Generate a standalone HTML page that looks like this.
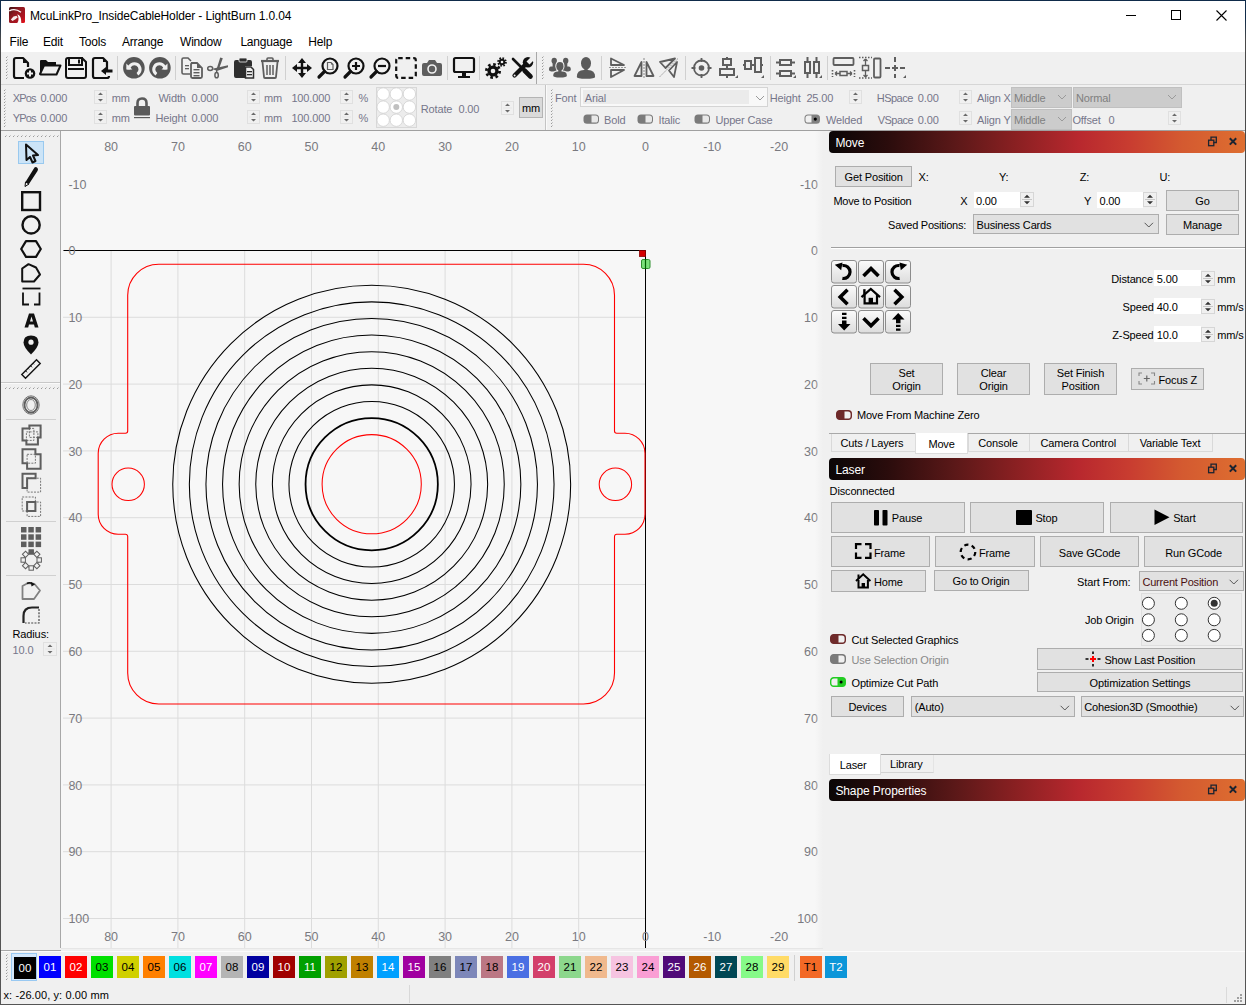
<!DOCTYPE html><html><head><meta charset="utf-8"><style>
html,body{margin:0;padding:0;}
body{width:1246px;height:1005px;position:relative;overflow:hidden;background:#f0f0f0;font-family:"Liberation Sans", sans-serif;}
.t{position:absolute;white-space:nowrap;}
.b{position:absolute;box-sizing:border-box;}
svg{position:absolute;overflow:visible;}

</style></head><body>
<div class="b" style="left:0px;top:0px;width:1246px;height:31px;background:#fff;"></div>
<div class="b" style="left:0px;top:31px;width:1246px;height:21px;background:#fff;"></div>
<div class="b" style="left:0px;top:0px;width:1246px;height:1px;background:#0f2b4a;"></div>
<div class="b" style="left:0px;top:0px;width:1px;height:1005px;background:linear-gradient(#0f2b4a 0px, #0f2b4a 18px, #4a4a4a 40px, #555 100%);"></div>
<div class="b" style="left:1245px;top:0px;width:1px;height:1005px;background:linear-gradient(#0f2b4a 0px, #0f2b4a 18px, #4a4a4a 40px, #555 100%);"></div>
<div class="b" style="left:0px;top:1004px;width:1246px;height:1px;background:#555;"></div>
<svg style="left:9px;top:7px" width="16" height="16" viewBox="0 0 16 16">
<defs><linearGradient id="lg1" x1="0" y1="0" x2="1" y2="1"><stop offset="0" stop-color="#3a1010"/><stop offset="0.35" stop-color="#8a1820"/><stop offset="0.75" stop-color="#b01420"/><stop offset="1" stop-color="#f01018"/></linearGradient></defs>
<rect x="0" y="0" width="16" height="16" rx="1.5" fill="url(#lg1)"/>
<path d="M0.3 3.8 Q6 0.8 12 5.2" stroke="#fff" stroke-width="1.3" fill="none"/>
<path d="M8.3 7.2 Q11.5 8.5 12 12 L12.3 16 L8.3 16 Q10.8 12.5 8.3 7.2 Z" fill="#fff"/>
<path d="M1.8 12.5 L4.5 9.5 L7.5 8.8 L8.8 10.2 L6.5 12.3 L3.5 14 Z" fill="#f6eaea"/>
</svg>
<div class="t" style="left:30px;top:10px;font-size:12px;line-height:12px;color:#000;letter-spacing:-0.13px;">McuLinkPro_InsideCableHolder - LightBurn 1.0.04</div>
<div class="b" style="left:1126px;top:15px;width:10px;height:1px;background:#000;"></div>
<div class="b" style="left:1171px;top:10px;width:10px;height:10px;border:1px solid #000;"></div>
<svg style="left:1216px;top:10px" width="11" height="11" viewBox="0 0 11 11"><path d="M0.5 0.5 L10.5 10.5 M10.5 0.5 L0.5 10.5" stroke="#000" stroke-width="1.1"/></svg>
<div class="t" style="left:9.6px;top:36px;font-size:12px;line-height:12px;color:#000;letter-spacing:-0.2px;">File</div>
<div class="t" style="left:43px;top:36px;font-size:12px;line-height:12px;color:#000;letter-spacing:-0.2px;">Edit</div>
<div class="t" style="left:79px;top:36px;font-size:12px;line-height:12px;color:#000;letter-spacing:-0.2px;">Tools</div>
<div class="t" style="left:122px;top:36px;font-size:12px;line-height:12px;color:#000;letter-spacing:-0.2px;">Arrange</div>
<div class="t" style="left:180px;top:36px;font-size:12px;line-height:12px;color:#000;letter-spacing:-0.2px;">Window</div>
<div class="t" style="left:240.4px;top:36px;font-size:12px;line-height:12px;color:#000;letter-spacing:-0.2px;">Language</div>
<div class="t" style="left:308.3px;top:36px;font-size:12px;line-height:12px;color:#000;letter-spacing:-0.2px;">Help</div>
<div class="b" style="left:1px;top:52px;width:1244px;height:32px;background:#f0f0f0;"></div>
<div class="b" style="left:1px;top:84px;width:1244px;height:1px;background:#d6d6d6;"></div>
<svg style="left:0;top:0" width="1246" height="1005"><rect x="6" y="57" width="1" height="1" fill="#9a9a9a"/><rect x="7" y="56" width="1" height="1" fill="#c8c8c8"/><rect x="6" y="60" width="1" height="1" fill="#9a9a9a"/><rect x="7" y="59" width="1" height="1" fill="#c8c8c8"/><rect x="6" y="63" width="1" height="1" fill="#9a9a9a"/><rect x="7" y="62" width="1" height="1" fill="#c8c8c8"/><rect x="6" y="66" width="1" height="1" fill="#9a9a9a"/><rect x="7" y="65" width="1" height="1" fill="#c8c8c8"/><rect x="6" y="69" width="1" height="1" fill="#9a9a9a"/><rect x="7" y="68" width="1" height="1" fill="#c8c8c8"/><rect x="6" y="72" width="1" height="1" fill="#9a9a9a"/><rect x="7" y="71" width="1" height="1" fill="#c8c8c8"/><rect x="6" y="75" width="1" height="1" fill="#9a9a9a"/><rect x="7" y="74" width="1" height="1" fill="#c8c8c8"/><rect x="6" y="78" width="1" height="1" fill="#9a9a9a"/><rect x="7" y="77" width="1" height="1" fill="#c8c8c8"/></svg>
<svg style="left:13px;top:57px" width="23" height="22" viewBox="0 0 23 22"><path d="M1 3 Q1 1 3 1 L10 1 L15 6 L15 10" stroke="#111" stroke-width="2.2" fill="none" stroke-linejoin="round"/><path d="M10 1 L10 6 L15 6" fill="#111"/><path d="M1 3 L1 19 Q1 21 3 21 L11 21" stroke="#111" stroke-width="2.2" fill="none"/><circle cx="17" cy="16.5" r="5.3" fill="#111"/><path d="M17 13.5 V19.5 M14 16.5 H20" stroke="#f0f0f0" stroke-width="2"/></svg>
<svg style="left:39px;top:59px" width="23" height="17" viewBox="0 0 23 17"><path d="M1 2 Q1 1 2 1 L7 1 L9 3 L17 3 L17 6 L5 6 L1 15 Z" fill="#111"/><path d="M1 15 L5 6.5 L21.5 6.5 L17.5 15.5 L2 15.5 Z" stroke="#111" stroke-width="2" fill="none" stroke-linejoin="round"/></svg>
<svg style="left:65px;top:57px" width="22" height="22" viewBox="0 0 22 22"><path d="M1 3 Q1 1 3 1 L17 1 L21 5 L21 19 Q21 21 19 21 L3 21 Q1 21 1 19 Z" stroke="#111" stroke-width="2" fill="none"/><rect x="4" y="1" width="13" height="7" stroke="#111" stroke-width="2" fill="none"/><rect x="13" y="2.5" width="2" height="4" fill="#111"/><rect x="3" y="11" width="16" height="2" fill="#111"/></svg>
<svg style="left:92px;top:57px" width="21" height="22" viewBox="0 0 21 22"><path d="M15 13 L15 5 L11 1 L3 1 Q1 1 1 3 L1 19 Q1 21 3 21 L15 21 Q17 21 17 19" stroke="#111" stroke-width="2.2" fill="none" stroke-linejoin="round"/><path d="M11 1 L11 5 L15 5 Z" fill="#111"/><path d="M9 14 L14 10 L14 12.5 L20.5 12.5 L20.5 15.5 L14 15.5 L14 18 Z" fill="#111"/></svg>
<div class="b" style="left:117px;top:56px;width:1px;height:24px;background:#d0d0d0;"></div>
<svg style="left:123px;top:57px" width="22" height="22" viewBox="0 0 22 22"><circle cx="10.9" cy="10.8" r="10.8" fill="#555"/><path d="M4.20 12.40 A7.2 7.2 0 1 1 15.22 18.51 L13.57 15.88 A4.1 4.1 0 1 0 7.30 12.40 Z" fill="#f0f0f0"/><path d="M3.3 6.6 L3.3 12.4 L9.3 12.4 Z" fill="#f0f0f0"/></svg>
<svg style="left:149px;top:57px" width="22" height="22" viewBox="0 0 22 22"><g transform="translate(21.8 0) scale(-1 1)"><circle cx="10.9" cy="10.8" r="10.8" fill="#555"/><path d="M4.20 12.40 A7.2 7.2 0 1 1 15.22 18.51 L13.57 15.88 A4.1 4.1 0 1 0 7.30 12.40 Z" fill="#f0f0f0"/><path d="M3.3 6.6 L3.3 12.4 L9.3 12.4 Z" fill="#f0f0f0"/></g></svg>
<div class="b" style="left:175px;top:56px;width:1px;height:24px;background:#d0d0d0;"></div>
<svg style="left:181px;top:57px" width="22" height="22" viewBox="0 0 22 22"><path d="M9 17 L2.5 17 Q1 17 1 15.5 L1 2.5 Q1 1 2.5 1 L7 1 L10 4" stroke="#5e5e5e" stroke-width="1.6" fill="none"/><rect x="4" y="8" width="4" height="1.3" fill="#5e5e5e"/><rect x="4" y="11" width="4" height="1.3" fill="#5e5e5e"/><path d="M10 6 L16 6 L21 11 L21 19.5 Q21 21 19.5 21 L11.5 21 Q10 21 10 19.5 L10 7.5 Q10 6 11.5 6 Z" stroke="#5e5e5e" stroke-width="1.8" fill="none"/><path d="M16 6 L16 11 L21 11 Z" fill="#5e5e5e"/><rect x="12.5" y="12" width="6" height="1.4" fill="#5e5e5e"/><rect x="12.5" y="15" width="6" height="1.4" fill="#5e5e5e"/><rect x="12.5" y="18" width="6" height="1.4" fill="#5e5e5e"/></svg>
<svg style="left:207px;top:57px" width="21" height="22" viewBox="0 0 21 22"><ellipse cx="3.2" cy="11.5" rx="2.5" ry="1.9" stroke="#5e5e5e" stroke-width="1.5" fill="none"/><ellipse cx="9.6" cy="18.2" rx="1.7" ry="2.6" stroke="#5e5e5e" stroke-width="1.5" fill="none"/><path d="M13.2 0.5 L15.8 1.2 L11.6 13 L9.2 13.2 Z" fill="#5e5e5e"/><path d="M21 8.2 L21 10.2 L10.5 13.8 L6.2 12.6 L6.5 11.4 Z" fill="#5e5e5e"/><path d="M9.5 13 L9.8 15.6" stroke="#5e5e5e" stroke-width="1.4"/></svg>
<svg style="left:233px;top:57px" width="21" height="22" viewBox="0 0 21 22"><path d="M3 3 L17 3 Q19 3 19 5 L19 9 L12 9 L12 21 L3 21 Q1 21 1 19 L1 5 Q1 3 3 3 Z" fill="#2e2e2e"/><rect x="6" y="1" width="8" height="4" rx="1" fill="#2e2e2e" stroke="#f0f0f0" stroke-width="0.8"/><path d="M12.5 10 L18 10 L20.5 12.5 L20.5 21 L12.5 21 Z" fill="#f0f0f0" stroke="#2e2e2e" stroke-width="1.5"/><rect x="14" y="14" width="5" height="1.3" fill="#2e2e2e"/><rect x="14" y="17" width="5" height="1.3" fill="#2e2e2e"/></svg>
<svg style="left:260px;top:57px" width="20" height="22" viewBox="0 0 20 22"><path d="M1 4 L19 4" stroke="#5e5e5e" stroke-width="2.2"/><path d="M7 4 L7 2 Q7 1 8 1 L12 1 Q13 1 13 2 L13 4" stroke="#5e5e5e" stroke-width="1.6" fill="none"/><path d="M2.5 5 L4 20 Q4 21 5 21 L15 21 Q16 21 16 20 L17.5 5" stroke="#5e5e5e" stroke-width="1.8" fill="none"/><path d="M7 8 V18 M10 8 V18 M13 8 V18" stroke="#5e5e5e" stroke-width="1.5"/></svg>
<div class="b" style="left:285px;top:56px;width:1px;height:24px;background:#d0d0d0;"></div>
<svg style="left:291px;top:57px" width="22" height="22" viewBox="0 0 22 22"><path d="M11 1 L15 6 L12.2 6 L12.2 9.8 L16 9.8 L16 7 L21 11 L16 15 L16 12.2 L12.2 12.2 L12.2 16 L15 16 L11 21 L7 16 L9.8 16 L9.8 12.2 L6 12.2 L6 15 L1 11 L6 7 L6 9.8 L9.8 9.8 L9.8 6 L7 6 Z" fill="#111"/></svg>
<svg style="left:317px;top:57px" width="22" height="22" viewBox="0 0 22 22"><circle cx="13" cy="9" r="7.5" stroke="#111" stroke-width="2.2" fill="none"/><path d="M7.5 14.5 L2 20" stroke="#111" stroke-width="3.2" stroke-linecap="round"/><path d="M10.5 5.5 L14 5.5 L16 7.5 L16 12.5 L10.5 12.5 Z" stroke="#5e5e5e" stroke-width="1.2" fill="none"/><path d="M14 5.5 L14 7.5 L16 7.5" fill="#5e5e5e"/></svg>
<svg style="left:343px;top:57px" width="22" height="22" viewBox="0 0 22 22"><circle cx="13" cy="9" r="7.5" stroke="#111" stroke-width="2.2" fill="none"/><path d="M7.5 14.5 L2 20" stroke="#111" stroke-width="3.2" stroke-linecap="round"/><path d="M13 5 V13 M9 9 H17" stroke="#111" stroke-width="2.2"/></svg>
<svg style="left:369px;top:57px" width="22" height="22" viewBox="0 0 22 22"><circle cx="13" cy="9" r="7.5" stroke="#111" stroke-width="2.2" fill="none"/><path d="M7.5 14.5 L2 20" stroke="#111" stroke-width="3.2" stroke-linecap="round"/><path d="M9 9 H17" stroke="#111" stroke-width="2.2"/></svg>
<svg style="left:395px;top:57px" width="22" height="22" viewBox="0 0 22 22"><rect x="1.2" y="1.2" width="19.6" height="19.6" rx="2" stroke="#111" stroke-width="2.2" fill="none" stroke-dasharray="4.5 3"/></svg>
<svg style="left:421px;top:59px" width="22" height="18" viewBox="0 0 22 18"><path d="M1 6 Q1 4 3 4 L6 4 L8 1 L14 1 L16 4 L19 4 Q21 4 21 6 L21 15 Q21 17 19 17 L3 17 Q1 17 1 15 Z" fill="#5e5e5e"/><circle cx="11" cy="10" r="4" stroke="#f0f0f0" stroke-width="1.6" fill="none"/></svg>
<div class="b" style="left:447px;top:56px;width:1px;height:24px;background:#d0d0d0;"></div>
<svg style="left:453px;top:57px" width="22" height="22" viewBox="0 0 22 22"><rect x="1" y="1" width="20" height="14" rx="1.5" stroke="#111" stroke-width="2.2" fill="none"/><path d="M9 15 L9 19 L13 19 L13 15 Z" fill="#111"/><rect x="5" y="19" width="12" height="2" fill="#111"/></svg>
<div class="b" style="left:479px;top:56px;width:1px;height:24px;background:#d0d0d0;"></div>
<svg style="left:485px;top:57px" width="22" height="22" viewBox="0 0 22 22"><circle cx="8" cy="14" r="5.6" fill="#111"/><circle cx="8" cy="14" r="6.6" stroke="#111" stroke-width="2.8" fill="none" stroke-dasharray="2.6 2.58"/><circle cx="8" cy="14" r="2.3" fill="#f0f0f0"/><circle cx="17" cy="5" r="3.2" fill="#111"/><circle cx="17" cy="5" r="3.9" stroke="#111" stroke-width="1.8" fill="none" stroke-dasharray="1.6 1.46"/><circle cx="17" cy="5" r="1.3" fill="#f0f0f0"/></svg>
<svg style="left:511px;top:57px" width="23" height="22" viewBox="0 0 23 22"><path d="M2 2 L11 11" stroke="#111" stroke-width="2.6" stroke-linecap="round"/><path d="M13.5 13.5 L19.5 19.5" stroke="#111" stroke-width="4.6" stroke-linecap="round"/><path d="M3.5 18.5 L14 8" stroke="#111" stroke-width="4.2" stroke-linecap="round"/><circle cx="17" cy="5.3" r="5.2" fill="#111"/><path d="M15.5 4.5 L20 0 L23 3 L18.5 7.5 Z" fill="#f0f0f0"/><circle cx="3.6" cy="18.4" r="1" fill="#f0f0f0"/></svg>
<div class="b" style="left:536px;top:52px;width:1px;height:32px;background:#a8a8a8;"></div>
<svg style="left:0;top:0" width="1246" height="1005"><rect x="542" y="57" width="1" height="1" fill="#9a9a9a"/><rect x="543" y="56" width="1" height="1" fill="#c8c8c8"/><rect x="542" y="60" width="1" height="1" fill="#9a9a9a"/><rect x="543" y="59" width="1" height="1" fill="#c8c8c8"/><rect x="542" y="63" width="1" height="1" fill="#9a9a9a"/><rect x="543" y="62" width="1" height="1" fill="#c8c8c8"/><rect x="542" y="66" width="1" height="1" fill="#9a9a9a"/><rect x="543" y="65" width="1" height="1" fill="#c8c8c8"/><rect x="542" y="69" width="1" height="1" fill="#9a9a9a"/><rect x="543" y="68" width="1" height="1" fill="#c8c8c8"/><rect x="542" y="72" width="1" height="1" fill="#9a9a9a"/><rect x="543" y="71" width="1" height="1" fill="#c8c8c8"/><rect x="542" y="75" width="1" height="1" fill="#9a9a9a"/><rect x="543" y="74" width="1" height="1" fill="#c8c8c8"/><rect x="542" y="78" width="1" height="1" fill="#9a9a9a"/><rect x="543" y="77" width="1" height="1" fill="#c8c8c8"/></svg>
<svg style="left:0;top:0" width="1246" height="1005"><g fill="#5a5a5a"><ellipse cx="554.2" cy="60.8" rx="2.7" ry="3.0"/><path d="M549 69.7 Q549 66.5 550.9 66.5 L554.9 66.5 Q556.8 66.5 556.8 69.7 Q556.8 71.5 552.9 71.5 Q549 71.5 549 69.7 Z"/><rect x="552.6" y="62.3" width="3.2" height="4.700000000000003"/><ellipse cx="565.7" cy="60.8" rx="2.7" ry="3.0"/><path d="M562.5 69.7 Q562.5 66.5 564.65 66.5 L568.65 66.5 Q570.8 66.5 570.8 69.7 Q570.8 71.5 566.65 71.5 Q562.5 71.5 562.5 69.7 Z"/><rect x="564.1" y="62.3" width="3.2" height="4.700000000000003"/></g><g fill="#f0f0f0" stroke="#f0f0f0" stroke-width="2"><ellipse cx="559.9" cy="66.2" rx="3.6" ry="4.3"/><path d="M553.2 75.7 Q553.2 71.5 558.05 71.5 L562.05 71.5 Q566.9 71.5 566.9 75.7 Q566.9 77.5 560.05 77.5 Q553.2 77.5 553.2 75.7 Z"/><rect x="558.3" y="69.0" width="3.2" height="3.0"/></g><g fill="#5a5a5a"><ellipse cx="559.9" cy="66.2" rx="3.6" ry="4.3"/><path d="M553.2 75.7 Q553.2 71.5 558.05 71.5 L562.05 71.5 Q566.9 71.5 566.9 75.7 Q566.9 77.5 560.05 77.5 Q553.2 77.5 553.2 75.7 Z"/><rect x="558.3" y="69.0" width="3.2" height="3.0"/></g><g fill="#5a5a5a"><ellipse cx="586" cy="63.2" rx="5" ry="6.3"/><path d="M576.8 76.9 Q576.8 70 583.95 70 L587.95 70 Q595.1 70 595.1 76.9 Q595.1 78.7 585.95 78.7 Q576.8 78.7 576.8 76.9 Z"/><rect x="584.4" y="68.0" width="3.2" height="2.5"/></g></svg>
<div class="b" style="left:601px;top:56px;width:1px;height:24px;background:#d0d0d0;"></div>
<svg style="left:609px;top:57px" width="18" height="22" viewBox="0 0 18 22"><path d="M2 1.5 L15 8 L2 8 Z M2 13 L15 13 L2 20 Z" stroke="#5e5e5e" stroke-width="1.8" fill="none" stroke-linejoin="round"/><path d="M0 10.5 H17" stroke="#9a9a9a" stroke-width="1.2" stroke-dasharray="2 1"/></svg>
<svg style="left:633px;top:57px" width="23" height="22" viewBox="0 0 23 22"><path d="M8.5 5 L1.5 19 L8.5 19 Z M13.5 5 L20.5 19 L13.5 19 Z" stroke="#5e5e5e" stroke-width="1.8" fill="none" stroke-linejoin="round"/><path d="M11 1 V21" stroke="#9a9a9a" stroke-width="1.2" stroke-dasharray="2 1"/></svg>
<svg style="left:659px;top:57px" width="20" height="22" viewBox="0 0 20 22"><path d="M1 5 L16 1.5 L6.5 11 Z M18 5 L15 20 L10 13.5 Z" stroke="#5e5e5e" stroke-width="1.8" fill="none" stroke-linejoin="round"/><path d="M19 1.5 L0.5 20" stroke="#9a9a9a" stroke-width="1" stroke-dasharray="2 1"/></svg>
<div class="b" style="left:685px;top:56px;width:1px;height:24px;background:#d0d0d0;"></div>
<svg style="left:691px;top:57px" width="21" height="22" viewBox="0 0 21 22"><circle cx="10.5" cy="11" r="7.5" stroke="#5e5e5e" stroke-width="1.8" fill="none"/><circle cx="10.5" cy="11" r="2.8" fill="#5e5e5e"/><path d="M10.5 1 V5 M10.5 17 V21 M0.5 11 H4.5 M16.5 11 H20.5" stroke="#5e5e5e" stroke-width="1.8"/></svg>
<svg style="left:719px;top:57px" width="20" height="22" viewBox="0 0 20 22"><rect x="4" y="2" width="8" height="6" stroke="#5e5e5e" stroke-width="2" fill="none"/><rect x="1" y="12" width="14" height="6" stroke="#5e5e5e" stroke-width="2" fill="none"/><path d="M8 0 V2 M8 8 V12 M8 18 V21" stroke="#5e5e5e" stroke-width="2"/><path d="M19 21 L19 18 L16 21 Z" fill="#5e5e5e"/></svg>
<svg style="left:743px;top:57px" width="22" height="22" viewBox="0 0 22 22"><rect x="2" y="4" width="6" height="8" stroke="#5e5e5e" stroke-width="2" fill="none"/><rect x="12" y="1" width="6" height="14" stroke="#5e5e5e" stroke-width="2" fill="none"/><path d="M0 8 H2 M8 8 H12 M18 8 H20" stroke="#5e5e5e" stroke-width="2"/><path d="M21 21 L21 18 L18 21 Z" fill="#5e5e5e"/></svg>
<div class="b" style="left:770px;top:56px;width:1px;height:24px;background:#d0d0d0;"></div>
<svg style="left:776px;top:57px" width="21" height="22" viewBox="0 0 21 22"><rect x="4" y="3" width="11" height="5" stroke="#5e5e5e" stroke-width="2" fill="none"/><rect x="4" y="14" width="11" height="5" stroke="#5e5e5e" stroke-width="2" fill="none"/><path d="M0 5.5 H4 M15 5.5 H19 M0 16.5 H4 M15 16.5 H19" stroke="#5e5e5e" stroke-width="2"/><path d="M20 21 L20 18 L17 21 Z" fill="#5e5e5e"/></svg>
<svg style="left:802px;top:57px" width="21" height="22" viewBox="0 0 21 22"><rect x="3" y="5" width="5" height="11" stroke="#5e5e5e" stroke-width="2" fill="none"/><rect x="12" y="5" width="5" height="11" stroke="#5e5e5e" stroke-width="2" fill="none"/><path d="M5.5 0 V5 M5.5 16 V21 M14.5 0 V5 M14.5 16 V21" stroke="#5e5e5e" stroke-width="2"/><path d="M20 21 L20 18 L17 21 Z" fill="#5e5e5e"/></svg>
<div class="b" style="left:827px;top:56px;width:1px;height:24px;background:#d0d0d0;"></div>
<svg style="left:832px;top:57px" width="24" height="22" viewBox="0 0 24 22"><rect x="1.5" y="1" width="20" height="7" rx="1" stroke="#5e5e5e" stroke-width="1.8" fill="none"/><path d="M0.5 13 V20 M22.5 13 V20" stroke="#5e5e5e" stroke-width="1.6" stroke-dasharray="1.5 1.5"/><rect x="8" y="14.5" width="7" height="4" stroke="#5e5e5e" stroke-width="1.5" fill="none"/><path d="M3 16.5 H8 M15 16.5 H20 M3 16.5 L5 14.5 M3 16.5 L5 18.5 M20 16.5 L18 14.5 M20 16.5 L18 18.5" stroke="#5e5e5e" stroke-width="1.3"/></svg>
<svg style="left:858px;top:57px" width="15" height="22" viewBox="0 0 15 22"><path d="M1 0.5 H14 M1 21 H14" stroke="#5e5e5e" stroke-width="1.6" stroke-dasharray="1.5 1.5"/><rect x="4.5" y="8.5" width="6" height="5" stroke="#5e5e5e" stroke-width="1.5" fill="none"/><path d="M7.5 2 V8.5 M7.5 13.5 V20 M7.5 2 L5.5 4 M7.5 2 L9.5 4 M7.5 20 L5.5 18 M7.5 20 L9.5 18" stroke="#5e5e5e" stroke-width="1.3"/></svg>
<svg style="left:873px;top:57px" width="9" height="22" viewBox="0 0 9 22"><rect x="1" y="1.5" width="6.5" height="19" rx="1" stroke="#5e5e5e" stroke-width="1.8" fill="none"/></svg>
<svg style="left:885px;top:57px" width="22" height="22" viewBox="0 0 22 22"><path d="M10 0 V5 M10 8 V14 M10 17 V21 M0 11 H5 M7 11 H13 M15 11 H20" stroke="#5e5e5e" stroke-width="2"/><path d="M21 21 L21 18 L18 21 Z" fill="#5e5e5e"/></svg>
<div class="b" style="left:1px;top:85px;width:1244px;height:45px;background:#f0f0f0;"></div>
<div class="b" style="left:1px;top:130px;width:1244px;height:1px;background:#a0a0a0;"></div>
<svg style="left:0;top:0" width="1246" height="1005"><rect x="4" y="90" width="1" height="1" fill="#9a9a9a"/><rect x="5" y="89" width="1" height="1" fill="#c8c8c8"/><rect x="4" y="93" width="1" height="1" fill="#9a9a9a"/><rect x="5" y="92" width="1" height="1" fill="#c8c8c8"/><rect x="4" y="96" width="1" height="1" fill="#9a9a9a"/><rect x="5" y="95" width="1" height="1" fill="#c8c8c8"/><rect x="4" y="99" width="1" height="1" fill="#9a9a9a"/><rect x="5" y="98" width="1" height="1" fill="#c8c8c8"/><rect x="4" y="102" width="1" height="1" fill="#9a9a9a"/><rect x="5" y="101" width="1" height="1" fill="#c8c8c8"/><rect x="4" y="105" width="1" height="1" fill="#9a9a9a"/><rect x="5" y="104" width="1" height="1" fill="#c8c8c8"/><rect x="4" y="108" width="1" height="1" fill="#9a9a9a"/><rect x="5" y="107" width="1" height="1" fill="#c8c8c8"/><rect x="4" y="111" width="1" height="1" fill="#9a9a9a"/><rect x="5" y="110" width="1" height="1" fill="#c8c8c8"/><rect x="4" y="114" width="1" height="1" fill="#9a9a9a"/><rect x="5" y="113" width="1" height="1" fill="#c8c8c8"/><rect x="4" y="117" width="1" height="1" fill="#9a9a9a"/><rect x="5" y="116" width="1" height="1" fill="#c8c8c8"/><rect x="4" y="120" width="1" height="1" fill="#9a9a9a"/><rect x="5" y="119" width="1" height="1" fill="#c8c8c8"/><rect x="4" y="123" width="1" height="1" fill="#9a9a9a"/><rect x="5" y="122" width="1" height="1" fill="#c8c8c8"/><rect x="4" y="126" width="1" height="1" fill="#9a9a9a"/><rect x="5" y="125" width="1" height="1" fill="#c8c8c8"/></svg>
<div class="t" style="left:12.8px;top:93px;font-size:11px;line-height:11px;color:#76768a;letter-spacing:-0.9px;">XPos</div>
<div class="t" style="left:40.4px;top:93px;font-size:11px;line-height:11px;color:#76768a;letter-spacing:-0.15px;">0.000</div>
<div class="t" style="left:12.8px;top:113px;font-size:11px;line-height:11px;color:#76768a;letter-spacing:-0.9px;">YPos</div>
<div class="t" style="left:40.4px;top:113px;font-size:11px;line-height:11px;color:#76768a;letter-spacing:-0.15px;">0.000</div>
<div class="b" style="left:94px;top:90px;width:13px;height:14px;border:1px solid #e0e0e0;background:#f0f0f0;"></div>
<svg style="left:94px;top:90px" width="13" height="14"><path d="M4.0 5.0 L6.5 2.5 L9.0 5.0 Z M4.0 9.0 L6.5 11.5 L9.0 9.0 Z" fill="#6a6a6a"/><path d="M2 7.0 H11" stroke="#e6e6e6" stroke-width="1"/></svg>
<div class="b" style="left:94px;top:110px;width:13px;height:14px;border:1px solid #e0e0e0;background:#f0f0f0;"></div>
<svg style="left:94px;top:110px" width="13" height="14"><path d="M4.0 5.0 L6.5 2.5 L9.0 5.0 Z M4.0 9.0 L6.5 11.5 L9.0 9.0 Z" fill="#6a6a6a"/><path d="M2 7.0 H11" stroke="#e6e6e6" stroke-width="1"/></svg>
<div class="t" style="left:111.7px;top:93px;font-size:11px;line-height:11px;color:#76768a;letter-spacing:-0.15px;">mm</div>
<div class="t" style="left:111.7px;top:113px;font-size:11px;line-height:11px;color:#76768a;letter-spacing:-0.15px;">mm</div>
<svg style="left:133px;top:97px" width="18" height="22" viewBox="0 0 18 22"><path d="M4.5 9 L4.5 6 Q4.5 1.5 9 1.5 Q13.5 1.5 13.5 6 L13.5 9" stroke="#5a5a5a" stroke-width="2.6" fill="none"/><rect x="1" y="9" width="16" height="9.5" rx="1" fill="#5a5a5a"/><rect x="1" y="20" width="16" height="1.2" fill="#5a5a5a"/></svg>
<div class="t" style="left:158.4px;top:93px;font-size:11px;line-height:11px;color:#76768a;letter-spacing:-0.15px;">Width</div>
<div class="t" style="left:191.5px;top:93px;font-size:11px;line-height:11px;color:#76768a;letter-spacing:-0.15px;">0.000</div>
<div class="t" style="left:155.5px;top:113px;font-size:11px;line-height:11px;color:#76768a;letter-spacing:-0.15px;">Height</div>
<div class="t" style="left:191.5px;top:113px;font-size:11px;line-height:11px;color:#76768a;letter-spacing:-0.15px;">0.000</div>
<div class="b" style="left:247px;top:90px;width:13px;height:14px;border:1px solid #e0e0e0;background:#f0f0f0;"></div>
<svg style="left:247px;top:90px" width="13" height="14"><path d="M4.0 5.0 L6.5 2.5 L9.0 5.0 Z M4.0 9.0 L6.5 11.5 L9.0 9.0 Z" fill="#6a6a6a"/><path d="M2 7.0 H11" stroke="#e6e6e6" stroke-width="1"/></svg>
<div class="b" style="left:247px;top:110px;width:13px;height:14px;border:1px solid #e0e0e0;background:#f0f0f0;"></div>
<svg style="left:247px;top:110px" width="13" height="14"><path d="M4.0 5.0 L6.5 2.5 L9.0 5.0 Z M4.0 9.0 L6.5 11.5 L9.0 9.0 Z" fill="#6a6a6a"/><path d="M2 7.0 H11" stroke="#e6e6e6" stroke-width="1"/></svg>
<div class="t" style="left:264px;top:93px;font-size:11px;line-height:11px;color:#76768a;letter-spacing:-0.15px;">mm</div>
<div class="t" style="left:264px;top:113px;font-size:11px;line-height:11px;color:#76768a;letter-spacing:-0.15px;">mm</div>
<div class="t" style="left:291.4px;top:93px;font-size:11px;line-height:11px;color:#76768a;letter-spacing:-0.15px;">100.000</div>
<div class="t" style="left:291.4px;top:113px;font-size:11px;line-height:11px;color:#76768a;letter-spacing:-0.15px;">100.000</div>
<div class="b" style="left:340px;top:90px;width:13px;height:14px;border:1px solid #e0e0e0;background:#f0f0f0;"></div>
<svg style="left:340px;top:90px" width="13" height="14"><path d="M4.0 5.0 L6.5 2.5 L9.0 5.0 Z M4.0 9.0 L6.5 11.5 L9.0 9.0 Z" fill="#6a6a6a"/><path d="M2 7.0 H11" stroke="#e6e6e6" stroke-width="1"/></svg>
<div class="b" style="left:340px;top:110px;width:13px;height:14px;border:1px solid #e0e0e0;background:#f0f0f0;"></div>
<svg style="left:340px;top:110px" width="13" height="14"><path d="M4.0 5.0 L6.5 2.5 L9.0 5.0 Z M4.0 9.0 L6.5 11.5 L9.0 9.0 Z" fill="#6a6a6a"/><path d="M2 7.0 H11" stroke="#e6e6e6" stroke-width="1"/></svg>
<div class="t" style="left:358.4px;top:93px;font-size:11px;line-height:11px;color:#76768a;letter-spacing:-0.15px;">%</div>
<div class="t" style="left:358.4px;top:113px;font-size:11px;line-height:11px;color:#76768a;letter-spacing:-0.15px;">%</div>
<div class="b" style="left:376px;top:87px;width:41px;height:41px;border:1px solid #d8d8d8;background:#ececec;"></div>
<svg style="left:376px;top:87px" width="41" height="41"><circle cx="7.199999999999989" cy="7.0" r="6.2" fill="#fff" stroke="#d0d0d0" stroke-width="0.8"/><circle cx="20.30000000000001" cy="7.0" r="6.2" fill="#fff" stroke="#d0d0d0" stroke-width="0.8"/><circle cx="33.39999999999998" cy="7.0" r="6.2" fill="#fff" stroke="#d0d0d0" stroke-width="0.8"/><circle cx="7.199999999999989" cy="20.099999999999994" r="6.2" fill="#fff" stroke="#d0d0d0" stroke-width="0.8"/><circle cx="20.30000000000001" cy="20.099999999999994" r="6.2" fill="#fff" stroke="#d0d0d0" stroke-width="0.8"/><circle cx="33.39999999999998" cy="20.099999999999994" r="6.2" fill="#fff" stroke="#d0d0d0" stroke-width="0.8"/><circle cx="7.199999999999989" cy="33.2" r="6.2" fill="#fff" stroke="#d0d0d0" stroke-width="0.8"/><circle cx="20.30000000000001" cy="33.2" r="6.2" fill="#fff" stroke="#d0d0d0" stroke-width="0.8"/><circle cx="33.39999999999998" cy="33.2" r="6.2" fill="#fff" stroke="#d0d0d0" stroke-width="0.8"/><circle cx="20.30000000000001" cy="20.099999999999994" r="3" fill="#c0c0c0"/></svg>
<div class="t" style="left:420.8px;top:104px;font-size:11px;line-height:11px;color:#76768a;letter-spacing:-0.15px;">Rotate</div>
<div class="t" style="left:458.5px;top:104px;font-size:11px;line-height:11px;color:#76768a;letter-spacing:-0.15px;">0.00</div>
<div class="b" style="left:501px;top:101px;width:13px;height:14px;border:1px solid #e0e0e0;background:#f0f0f0;"></div>
<svg style="left:501px;top:101px" width="13" height="14"><path d="M4.0 5.0 L6.5 2.5 L9.0 5.0 Z M4.0 9.0 L6.5 11.5 L9.0 9.0 Z" fill="#6a6a6a"/><path d="M2 7.0 H11" stroke="#e6e6e6" stroke-width="1"/></svg>
<div class="b" style="left:519px;top:97px;width:24px;height:21px;background:#dadada;border:1px solid #b4b4b4;"></div>
<div class="t" style="left:431px;width:200px;text-align:center;top:103px;font-size:11px;line-height:11px;color:#000;letter-spacing:-0.15px;">mm</div>
<div class="b" style="left:545px;top:85px;width:1px;height:45px;background:#c4c4c4;"></div>
<div class="b" style="left:546px;top:85px;width:1px;height:45px;background:#fafafa;"></div>
<svg style="left:0;top:0" width="1246" height="1005"><rect x="551" y="90" width="1" height="1" fill="#9a9a9a"/><rect x="552" y="89" width="1" height="1" fill="#c8c8c8"/><rect x="551" y="93" width="1" height="1" fill="#9a9a9a"/><rect x="552" y="92" width="1" height="1" fill="#c8c8c8"/><rect x="551" y="96" width="1" height="1" fill="#9a9a9a"/><rect x="552" y="95" width="1" height="1" fill="#c8c8c8"/><rect x="551" y="99" width="1" height="1" fill="#9a9a9a"/><rect x="552" y="98" width="1" height="1" fill="#c8c8c8"/><rect x="551" y="102" width="1" height="1" fill="#9a9a9a"/><rect x="552" y="101" width="1" height="1" fill="#c8c8c8"/><rect x="551" y="105" width="1" height="1" fill="#9a9a9a"/><rect x="552" y="104" width="1" height="1" fill="#c8c8c8"/><rect x="551" y="108" width="1" height="1" fill="#9a9a9a"/><rect x="552" y="107" width="1" height="1" fill="#c8c8c8"/><rect x="551" y="111" width="1" height="1" fill="#9a9a9a"/><rect x="552" y="110" width="1" height="1" fill="#c8c8c8"/><rect x="551" y="114" width="1" height="1" fill="#9a9a9a"/><rect x="552" y="113" width="1" height="1" fill="#c8c8c8"/><rect x="551" y="117" width="1" height="1" fill="#9a9a9a"/><rect x="552" y="116" width="1" height="1" fill="#c8c8c8"/><rect x="551" y="120" width="1" height="1" fill="#9a9a9a"/><rect x="552" y="119" width="1" height="1" fill="#c8c8c8"/><rect x="551" y="123" width="1" height="1" fill="#9a9a9a"/><rect x="552" y="122" width="1" height="1" fill="#c8c8c8"/><rect x="551" y="126" width="1" height="1" fill="#9a9a9a"/><rect x="552" y="125" width="1" height="1" fill="#c8c8c8"/></svg>
<div class="t" style="left:555px;top:93px;font-size:11px;line-height:11px;color:#76768a;letter-spacing:-0.15px;">Font</div>
<div class="b" style="left:580px;top:87px;width:188px;height:20px;background:#f8f8f8;border:1px solid #d4d4d4;"></div>
<div class="b" style="left:582.5px;top:90px;width:166.5px;height:14px;background:#ebebeb;"></div>
<div class="t" style="left:584.8px;top:93px;font-size:11px;line-height:11px;color:#76768a;letter-spacing:-0.15px;">Arial</div>
<svg style="left:754.5px;top:93.5px" width="10" height="8"><path d="M1 2 L5 6 L9 2" stroke="#9a9a9a" stroke-width="1" fill="none"/></svg>
<div class="t" style="left:769.8px;top:93px;font-size:11px;line-height:11px;color:#76768a;letter-spacing:-0.15px;">Height</div>
<div class="t" style="left:806.4px;top:93px;font-size:11px;line-height:11px;color:#76768a;letter-spacing:-0.15px;">25.00</div>
<div class="b" style="left:849px;top:90px;width:13px;height:14px;border:1px solid #e0e0e0;background:#f0f0f0;"></div>
<svg style="left:849px;top:90px" width="13" height="14"><path d="M4.0 5.0 L6.5 2.5 L9.0 5.0 Z M4.0 9.0 L6.5 11.5 L9.0 9.0 Z" fill="#6a6a6a"/><path d="M2 7.0 H11" stroke="#e6e6e6" stroke-width="1"/></svg>
<div class="t" style="left:876.7px;top:93px;font-size:11px;line-height:11px;color:#76768a;letter-spacing:-0.5px;">HSpace</div>
<div class="t" style="left:917.8px;top:93px;font-size:11px;line-height:11px;color:#76768a;letter-spacing:-0.15px;">0.00</div>
<div class="b" style="left:959px;top:90px;width:13px;height:14px;border:1px solid #e0e0e0;background:#f0f0f0;"></div>
<svg style="left:959px;top:90px" width="13" height="14"><path d="M4.0 5.0 L6.5 2.5 L9.0 5.0 Z M4.0 9.0 L6.5 11.5 L9.0 9.0 Z" fill="#6a6a6a"/><path d="M2 7.0 H11" stroke="#e6e6e6" stroke-width="1"/></svg>
<div class="t" style="left:877.7px;top:115px;font-size:11px;line-height:11px;color:#76768a;letter-spacing:-0.5px;">VSpace</div>
<div class="t" style="left:917.8px;top:115px;font-size:11px;line-height:11px;color:#76768a;letter-spacing:-0.15px;">0.00</div>
<div class="b" style="left:959px;top:111px;width:13px;height:14px;border:1px solid #e0e0e0;background:#f0f0f0;"></div>
<svg style="left:959px;top:111px" width="13" height="14"><path d="M4.0 5.0 L6.5 2.5 L9.0 5.0 Z M4.0 9.0 L6.5 11.5 L9.0 9.0 Z" fill="#6a6a6a"/><path d="M2 7.0 H11" stroke="#e6e6e6" stroke-width="1"/></svg>
<div class="t" style="left:977px;top:93px;font-size:11px;line-height:11px;color:#76768a;letter-spacing:-0.15px;">Align X</div>
<div class="t" style="left:977px;top:115px;font-size:11px;line-height:11px;color:#76768a;letter-spacing:-0.15px;">Align Y</div>
<div class="b" style="left:1011px;top:87px;width:61px;height:21px;background:#cccccc;border:1px solid #c0c0c0;"></div>
<div class="t" style="left:1014px;top:93px;font-size:11px;line-height:11px;color:#808080;letter-spacing:-0.15px;">Middle</div>
<svg style="left:1057px;top:93px" width="10" height="8"><path d="M1 2 L5 6 L9 2" stroke="#9a9a9a" stroke-width="1" fill="none"/></svg>
<div class="b" style="left:1073px;top:87px;width:109px;height:21px;background:#cccccc;border:1px solid #c0c0c0;"></div>
<div class="t" style="left:1076px;top:93px;font-size:11px;line-height:11px;color:#808080;letter-spacing:-0.15px;">Normal</div>
<svg style="left:1167px;top:93px" width="10" height="8"><path d="M1 2 L5 6 L9 2" stroke="#9a9a9a" stroke-width="1" fill="none"/></svg>
<div class="b" style="left:1011px;top:109px;width:61px;height:21px;background:#cccccc;border:1px solid #c0c0c0;"></div>
<div class="t" style="left:1014px;top:115px;font-size:11px;line-height:11px;color:#808080;letter-spacing:-0.15px;">Middle</div>
<svg style="left:1057px;top:115px" width="10" height="8"><path d="M1 2 L5 6 L9 2" stroke="#9a9a9a" stroke-width="1" fill="none"/></svg>
<div class="t" style="left:1072.4px;top:115px;font-size:11px;line-height:11px;color:#76768a;letter-spacing:-0.15px;">Offset</div>
<div class="t" style="left:1108.5px;top:115px;font-size:11px;line-height:11px;color:#76768a;letter-spacing:-0.15px;">0</div>
<div class="b" style="left:1168px;top:111px;width:13px;height:14px;border:1px solid #e0e0e0;background:#f0f0f0;"></div>
<svg style="left:1168px;top:111px" width="13" height="14"><path d="M4.0 5.0 L6.5 2.5 L9.0 5.0 Z M4.0 9.0 L6.5 11.5 L9.0 9.0 Z" fill="#6a6a6a"/><path d="M2 7.0 H11" stroke="#e6e6e6" stroke-width="1"/></svg>
<svg style="left:583px;top:114px" width="17" height="10"><rect x="0.5" y="0.5" width="15.5" height="9.2" rx="3.5" fill="#7a7a7a"/><path d="M8.5 1.5 H12.5 Q15 1.5 15 4 V6 Q15 8.6 12.5 8.6 H8.5 Z" fill="#e8e8e8"/></svg>
<div class="t" style="left:604.1px;top:115px;font-size:11px;line-height:11px;color:#76768a;letter-spacing:-0.15px;">Bold</div>
<svg style="left:637px;top:114px" width="17" height="10"><rect x="0.5" y="0.5" width="15.5" height="9.2" rx="3.5" fill="#7a7a7a"/><path d="M8.5 1.5 H12.5 Q15 1.5 15 4 V6 Q15 8.6 12.5 8.6 H8.5 Z" fill="#e8e8e8"/></svg>
<div class="t" style="left:658.5px;top:115px;font-size:11px;line-height:11px;color:#76768a;letter-spacing:-0.15px;">Italic</div>
<svg style="left:694px;top:114px" width="17" height="10"><rect x="0.5" y="0.5" width="15.5" height="9.2" rx="3.5" fill="#7a7a7a"/><path d="M8.5 1.5 H12.5 Q15 1.5 15 4 V6 Q15 8.6 12.5 8.6 H8.5 Z" fill="#e8e8e8"/></svg>
<div class="t" style="left:715.4px;top:115px;font-size:11px;line-height:11px;color:#76768a;letter-spacing:-0.15px;">Upper Case</div>
<svg style="left:804px;top:114px" width="17" height="10"><rect x="0.5" y="0.5" width="15.5" height="9.2" rx="3.5" fill="#808080"/><path d="M7.5 1.5 H4 Q1.5 1.5 1.5 4 V6 Q1.5 8.6 4 8.6 H7.5 Z" fill="#f0f0f0"/><circle cx="11.3" cy="5.1" r="1.6" fill="#000"/></svg>
<div class="t" style="left:826px;top:115px;font-size:11px;line-height:11px;color:#76768a;letter-spacing:-0.15px;">Welded</div>
<div class="b" style="left:1px;top:131px;width:59px;height:819px;background:#f0f0f0;"></div>
<div class="b" style="left:60px;top:131px;width:1px;height:819px;background:#a8a8a8;"></div>
<svg style="left:0;top:0" width="1246" height="1005"><rect x="5" y="136" width="1" height="1" fill="#9a9a9a"/><rect x="6" y="135" width="1" height="1" fill="#c8c8c8"/><rect x="9" y="136" width="1" height="1" fill="#9a9a9a"/><rect x="10" y="135" width="1" height="1" fill="#c8c8c8"/><rect x="13" y="136" width="1" height="1" fill="#9a9a9a"/><rect x="14" y="135" width="1" height="1" fill="#c8c8c8"/><rect x="17" y="136" width="1" height="1" fill="#9a9a9a"/><rect x="18" y="135" width="1" height="1" fill="#c8c8c8"/><rect x="21" y="136" width="1" height="1" fill="#9a9a9a"/><rect x="22" y="135" width="1" height="1" fill="#c8c8c8"/><rect x="25" y="136" width="1" height="1" fill="#9a9a9a"/><rect x="26" y="135" width="1" height="1" fill="#c8c8c8"/><rect x="29" y="136" width="1" height="1" fill="#9a9a9a"/><rect x="30" y="135" width="1" height="1" fill="#c8c8c8"/><rect x="33" y="136" width="1" height="1" fill="#9a9a9a"/><rect x="34" y="135" width="1" height="1" fill="#c8c8c8"/><rect x="37" y="136" width="1" height="1" fill="#9a9a9a"/><rect x="38" y="135" width="1" height="1" fill="#c8c8c8"/><rect x="41" y="136" width="1" height="1" fill="#9a9a9a"/><rect x="42" y="135" width="1" height="1" fill="#c8c8c8"/><rect x="45" y="136" width="1" height="1" fill="#9a9a9a"/><rect x="46" y="135" width="1" height="1" fill="#c8c8c8"/><rect x="49" y="136" width="1" height="1" fill="#9a9a9a"/><rect x="50" y="135" width="1" height="1" fill="#c8c8c8"/><rect x="53" y="136" width="1" height="1" fill="#9a9a9a"/><rect x="54" y="135" width="1" height="1" fill="#c8c8c8"/><rect x="57" y="136" width="1" height="1" fill="#9a9a9a"/><rect x="58" y="135" width="1" height="1" fill="#c8c8c8"/></svg>
<div class="b" style="left:18px;top:141px;width:26px;height:23px;background:#cce4f7;border:1px solid #99c9ef;"></div>
<svg style="left:24px;top:143px" width="16" height="21" viewBox="0 0 16 21"><path d="M2 1.5 L14 12 L9 12.5 L11.5 18 L8.5 19.5 L6 14 L2.5 17 Z" fill="#cce4f7" stroke="#111" stroke-width="2" stroke-linejoin="round"/></svg>
<svg style="left:23px;top:166px" width="16" height="22" viewBox="0 0 16 22"><path d="M11.5 1.5 Q13 0.5 14.5 2 Q15.5 3.5 14.5 5 L6 18 L2 20.5 L2.5 16 Z" fill="#111"/><path d="M2.5 16 L6 18 L2 20.5 Z" fill="#f0f0f0" stroke="#111" stroke-width="1"/></svg>
<svg style="left:21px;top:191px" width="21" height="21" viewBox="0 0 21 21"><rect x="1.2" y="1.2" width="17.8" height="17.8" stroke="#111" stroke-width="2.4" fill="none"/></svg>
<svg style="left:21px;top:215px" width="21" height="21" viewBox="0 0 21 21"><circle cx="10.1" cy="9.9" r="8.6" stroke="#111" stroke-width="2.4" fill="none"/></svg>
<svg style="left:20px;top:240px" width="22" height="19" viewBox="0 0 22 19"><path d="M6 1.2 L16 1.2 L20.8 9 L16 16.8 L6 16.8 L1.2 9 Z" stroke="#111" stroke-width="2.2" fill="none" stroke-linejoin="round"/></svg>
<svg style="left:21px;top:263px" width="21" height="21" viewBox="0 0 21 21"><path d="M7.5 1.2 L15 4.5 L19 11.5 L13 18.5 L1.2 18.5 L1.2 5.5 Z" stroke="#111" stroke-width="2" fill="none" stroke-linejoin="round"/></svg>
<svg style="left:22px;top:288px" width="19" height="18" viewBox="0 0 19 18"><path d="M0.5 0.5 H18.5" stroke="#111" stroke-width="1.8"/><path d="M1 4.5 V16.5 H7 M12 16.5 H17.5 V4.5" stroke="#111" stroke-width="1.8" fill="none"/></svg>
<svg style="left:24px;top:313px" width="15" height="15" viewBox="0 0 15 15"><path d="M5 0.5 L10 0.5 L14.5 14.5 L10.8 14.5 L10 11.5 L5 11.5 L4.2 14.5 L0.5 14.5 Z M6 8.5 L9 8.5 L7.5 3.5 Z" fill="#111" fill-rule="evenodd"/></svg>
<svg style="left:23px;top:335px" width="16" height="20" viewBox="0 0 16 20"><path d="M8 0.5 Q15.5 0.5 15.5 7.5 Q15.5 12 8 19.5 Q0.5 12 0.5 7.5 Q0.5 0.5 8 0.5 Z" fill="#111"/><circle cx="8" cy="7.2" r="2.6" fill="#f0f0f0"/></svg>
<svg style="left:21px;top:359px" width="20" height="20" viewBox="0 0 20 20"><path d="M0.8 15.5 L15.5 0.8 L19.2 4.5 L4.5 19.2 Z" stroke="#111" stroke-width="1.4" fill="none"/><path d="M4.5 11.8 L6 13.3 M7 9.3 L8 10.3 M9.5 6.8 L11 8.3 M12 4.3 L13 5.3" stroke="#111" stroke-width="1"/></svg>
<div class="b" style="left:1px;top:382px;width:59px;height:1px;background:#c8c8c8;"></div>
<div class="b" style="left:1px;top:383px;width:59px;height:1px;background:#fafafa;"></div>
<svg style="left:0;top:0" width="1246" height="1005"><rect x="5" y="388" width="1" height="1" fill="#9a9a9a"/><rect x="6" y="387" width="1" height="1" fill="#c8c8c8"/><rect x="9" y="388" width="1" height="1" fill="#9a9a9a"/><rect x="10" y="387" width="1" height="1" fill="#c8c8c8"/><rect x="13" y="388" width="1" height="1" fill="#9a9a9a"/><rect x="14" y="387" width="1" height="1" fill="#c8c8c8"/><rect x="17" y="388" width="1" height="1" fill="#9a9a9a"/><rect x="18" y="387" width="1" height="1" fill="#c8c8c8"/><rect x="21" y="388" width="1" height="1" fill="#9a9a9a"/><rect x="22" y="387" width="1" height="1" fill="#c8c8c8"/><rect x="25" y="388" width="1" height="1" fill="#9a9a9a"/><rect x="26" y="387" width="1" height="1" fill="#c8c8c8"/><rect x="29" y="388" width="1" height="1" fill="#9a9a9a"/><rect x="30" y="387" width="1" height="1" fill="#c8c8c8"/><rect x="33" y="388" width="1" height="1" fill="#9a9a9a"/><rect x="34" y="387" width="1" height="1" fill="#c8c8c8"/><rect x="37" y="388" width="1" height="1" fill="#9a9a9a"/><rect x="38" y="387" width="1" height="1" fill="#c8c8c8"/><rect x="41" y="388" width="1" height="1" fill="#9a9a9a"/><rect x="42" y="387" width="1" height="1" fill="#c8c8c8"/><rect x="45" y="388" width="1" height="1" fill="#9a9a9a"/><rect x="46" y="387" width="1" height="1" fill="#c8c8c8"/><rect x="49" y="388" width="1" height="1" fill="#9a9a9a"/><rect x="50" y="387" width="1" height="1" fill="#c8c8c8"/><rect x="53" y="388" width="1" height="1" fill="#9a9a9a"/><rect x="54" y="387" width="1" height="1" fill="#c8c8c8"/><rect x="57" y="388" width="1" height="1" fill="#9a9a9a"/><rect x="58" y="387" width="1" height="1" fill="#c8c8c8"/></svg>
<svg style="left:22px;top:395px" width="18" height="20" viewBox="0 0 18 20"><ellipse cx="9" cy="10" rx="8.2" ry="9.2" stroke="#777" stroke-width="1" fill="none"/><ellipse cx="9" cy="10" rx="6.5" ry="7.5" stroke="#5e5e5e" stroke-width="1.8" fill="none"/><ellipse cx="9" cy="10" rx="4.3" ry="5.5" stroke="#888" stroke-width="1" fill="none"/></svg>
<div class="b" style="left:6px;top:419px;width:50px;height:1px;background:#d0d0d0;"></div>
<svg style="left:0;top:0" width="1246" height="1005"><rect x="22.5" y="428.4" width="11.399999999999999" height="12.0" stroke="#777" stroke-width="1" fill="none" stroke-dasharray="2 1.2"/><rect x="29.4" y="425.5" width="11.200000000000003" height="11.899999999999977" stroke="#777" stroke-width="1" fill="none" stroke-dasharray="2 1.2"/><rect x="26.4" y="431.9" width="11.5" height="12.5" stroke="#777" stroke-width="1" fill="none" stroke-dasharray="2 1.2"/><path d="M22.5 428.4 H29.4 V425.5 H40.6 V437.4 H37.9 V444.4 H26.4 V440.4 H22.5 Z" stroke="#5e5e5e" stroke-width="2" fill="none"/><path d="M22.5 449.3 H35.4 V454.3 H40.6 V468.7 H27.1 V463.2 H22.5 Z" stroke="#5e5e5e" stroke-width="2" fill="none"/><rect x="27.1" y="454.3" width="8.299999999999997" height="8.899999999999977" stroke="#777" stroke-width="1" fill="none" stroke-dasharray="2 1.2"/><rect x="27.1" y="478.2" width="13.5" height="13.900000000000034" stroke="#777" stroke-width="1" fill="none" stroke-dasharray="2 1.2"/><path d="M22.5 473.7 H35.6 V478.2 H27.1 V488 H22.5 Z" stroke="#5e5e5e" stroke-width="2" fill="none"/><rect x="22.2" y="497" width="13.2" height="14" stroke="#777" stroke-width="1" fill="none" stroke-dasharray="2 1.2"/><rect x="27.1" y="502" width="13.5" height="14.399999999999977" stroke="#777" stroke-width="1" fill="none" stroke-dasharray="2 1.2"/><rect x="27.1" y="502" width="8.3" height="9" stroke="#5e5e5e" stroke-width="2" fill="none"/></svg>
<div class="b" style="left:6px;top:521px;width:50px;height:1px;background:#d0d0d0;"></div>
<svg style="left:21px;top:527px" width="21" height="21" viewBox="0 0 21 21"><rect x="0.0" y="0.0" width="5.5" height="5.5" fill="#5e5e5e"/><rect x="7.3" y="0.0" width="5.5" height="5.5" fill="#5e5e5e"/><rect x="14.6" y="0.0" width="5.5" height="5.5" fill="#5e5e5e"/><rect x="0.0" y="7.3" width="5.5" height="5.5" fill="#5e5e5e"/><rect x="7.3" y="7.3" width="5.5" height="5.5" fill="#5e5e5e"/><rect x="14.6" y="7.3" width="5.5" height="5.5" fill="#5e5e5e"/><rect x="0.0" y="14.6" width="5.5" height="5.5" fill="#5e5e5e"/><rect x="7.3" y="14.6" width="5.5" height="5.5" fill="#5e5e5e"/><rect x="14.6" y="14.6" width="5.5" height="5.5" fill="#5e5e5e"/></svg>
<svg style="left:21px;top:550px" width="21" height="21" viewBox="0 0 21 21"><circle cx="10.2" cy="10" r="7.5" stroke="#5e5e5e" stroke-width="1" fill="none"/><rect x="7.999999999999999" y="-0.20000000000000018" width="4.4" height="4.4" fill="#5e5e5e" stroke="#5e5e5e" stroke-width="1" transform="rotate(0 10.2 2.0)"/><rect x="13.65685424949238" y="2.14314575050762" width="4.4" height="4.4" fill="#f0f0f0" stroke="#5e5e5e" stroke-width="1" transform="rotate(45 15.856854249492379 4.34314575050762)"/><rect x="16.0" y="7.8" width="4.4" height="4.4" fill="#f0f0f0" stroke="#5e5e5e" stroke-width="1" transform="rotate(0 18.2 10.0)"/><rect x="13.65685424949238" y="13.45685424949238" width="4.4" height="4.4" fill="#f0f0f0" stroke="#5e5e5e" stroke-width="1" transform="rotate(45 15.856854249492379 15.65685424949238)"/><rect x="7.999999999999999" y="15.8" width="4.4" height="4.4" fill="#f0f0f0" stroke="#5e5e5e" stroke-width="1" transform="rotate(0 10.2 18.0)"/><rect x="2.3431457505076194" y="13.45685424949238" width="4.4" height="4.4" fill="#f0f0f0" stroke="#5e5e5e" stroke-width="1" transform="rotate(45 4.54314575050762 15.65685424949238)"/><rect x="-8.881784197001252e-16" y="7.800000000000002" width="4.4" height="4.4" fill="#f0f0f0" stroke="#5e5e5e" stroke-width="1" transform="rotate(0 2.1999999999999993 10.000000000000002)"/><rect x="2.3431457505076176" y="2.14314575050762" width="4.4" height="4.4" fill="#f0f0f0" stroke="#5e5e5e" stroke-width="1" transform="rotate(45 4.543145750507618 4.34314575050762)"/></svg>
<div class="b" style="left:6px;top:575px;width:50px;height:1px;background:#d0d0d0;"></div>
<svg style="left:21px;top:581px" width="21" height="20" viewBox="0 0 21 20"><path d="M1.5 5 L7 2 L13.5 3 L19 9.5 L13 18 L1.5 18 Z" stroke="#808080" stroke-width="1.8" fill="none" stroke-linejoin="round"/><path d="M6 2.5 Q9.5 0.5 12.5 3.5" stroke="#111" stroke-width="1.6" fill="none"/><path d="M10 1 L14 3.5 L10.5 5.5 Z" fill="#111"/></svg>
<svg style="left:22px;top:606px" width="18" height="18" viewBox="0 0 18 18"><path d="M1.5 17 L1.5 10 Q1.5 1.5 10 1.5 L17 1.5" stroke="#222" stroke-width="2.2" fill="none"/><path d="M17 3 V17 H3" stroke="#444" stroke-width="1.2" stroke-dasharray="2 1.3" fill="none"/></svg>
<div class="t" style="left:12.4px;top:629px;font-size:11px;line-height:11px;color:#000;letter-spacing:-0.1px;">Radius:</div>
<div class="t" style="left:12.4px;top:645px;font-size:11px;line-height:11px;color:#76768a;letter-spacing:-0.1px;">10.0</div>
<div class="b" style="left:43px;top:642px;width:14px;height:14px;border:1px solid #e0e0e0;background:#f0f0f0;"></div>
<svg style="left:43px;top:642px" width="14" height="14"><path d="M4.5 5.0 L7.0 2.5 L9.5 5.0 Z M4.5 9.0 L7.0 11.5 L9.5 9.0 Z" fill="#6a6a6a"/><path d="M2 7.0 H12" stroke="#e6e6e6" stroke-width="1"/></svg>
<div class="b" style="left:61px;top:131px;width:762px;height:817px;background:#f7f7f7;"></div>
<svg style="left:0;top:0" width="1246" height="1005"><line x1="645.5" y1="250.5" x2="645.5" y2="948" stroke="#dcdcdc" stroke-width="1"/><line x1="578.7" y1="250.5" x2="578.7" y2="948" stroke="#dcdcdc" stroke-width="1"/><line x1="511.9" y1="250.5" x2="511.9" y2="948" stroke="#dcdcdc" stroke-width="1"/><line x1="445.1" y1="250.5" x2="445.1" y2="948" stroke="#dcdcdc" stroke-width="1"/><line x1="378.3" y1="250.5" x2="378.3" y2="948" stroke="#dcdcdc" stroke-width="1"/><line x1="311.5" y1="250.5" x2="311.5" y2="948" stroke="#dcdcdc" stroke-width="1"/><line x1="244.70000000000005" y1="250.5" x2="244.70000000000005" y2="948" stroke="#dcdcdc" stroke-width="1"/><line x1="177.90000000000003" y1="250.5" x2="177.90000000000003" y2="948" stroke="#dcdcdc" stroke-width="1"/><line x1="111.10000000000002" y1="250.5" x2="111.10000000000002" y2="948" stroke="#dcdcdc" stroke-width="1"/><line x1="63" y1="250.5" x2="645.5" y2="250.5" stroke="#dcdcdc" stroke-width="1"/><line x1="63" y1="317.3" x2="645.5" y2="317.3" stroke="#dcdcdc" stroke-width="1"/><line x1="63" y1="384.1" x2="645.5" y2="384.1" stroke="#dcdcdc" stroke-width="1"/><line x1="63" y1="450.9" x2="645.5" y2="450.9" stroke="#dcdcdc" stroke-width="1"/><line x1="63" y1="517.7" x2="645.5" y2="517.7" stroke="#dcdcdc" stroke-width="1"/><line x1="63" y1="584.5" x2="645.5" y2="584.5" stroke="#dcdcdc" stroke-width="1"/><line x1="63" y1="651.3" x2="645.5" y2="651.3" stroke="#dcdcdc" stroke-width="1"/><line x1="63" y1="718.0999999999999" x2="645.5" y2="718.0999999999999" stroke="#dcdcdc" stroke-width="1"/><line x1="63" y1="784.9" x2="645.5" y2="784.9" stroke="#dcdcdc" stroke-width="1"/><line x1="63" y1="851.6999999999999" x2="645.5" y2="851.6999999999999" stroke="#dcdcdc" stroke-width="1"/><line x1="63" y1="918.5" x2="645.5" y2="918.5" stroke="#dcdcdc" stroke-width="1"/><line x1="63.5" y1="250.5" x2="645.5" y2="250.5" stroke="#000" stroke-width="1"/><line x1="645.5" y1="250.5" x2="645.5" y2="948" stroke="#000" stroke-width="1"/><circle cx="371.7" cy="484.2" r="66.15" stroke="#000" stroke-width="1.8" fill="none"/><circle cx="371.7" cy="484.2" r="82.75" stroke="#000" stroke-width="1.05" fill="none"/><circle cx="371.7" cy="484.2" r="99.35000000000001" stroke="#000" stroke-width="1.05" fill="none"/><circle cx="371.7" cy="484.2" r="115.95000000000002" stroke="#000" stroke-width="1.05" fill="none"/><circle cx="371.7" cy="484.2" r="132.55" stroke="#000" stroke-width="1.05" fill="none"/><circle cx="371.7" cy="484.2" r="149.15" stroke="#000" stroke-width="1.05" fill="none"/><circle cx="371.7" cy="484.2" r="165.75" stroke="#000" stroke-width="1.05" fill="none"/><circle cx="371.7" cy="484.2" r="182.35000000000002" stroke="#000" stroke-width="1.05" fill="none"/><circle cx="371.7" cy="484.2" r="198.95000000000002" stroke="#000" stroke-width="1.05" fill="none"/><circle cx="371.7" cy="484.2" r="49.6" stroke="#ff0000" stroke-width="1.05" fill="none"/><circle cx="128.2" cy="484.3" r="16.2" stroke="#ff0000" stroke-width="1.05" fill="none"/><circle cx="615.4" cy="484.3" r="16.2" stroke="#ff0000" stroke-width="1.05" fill="none"/><path d="M158.7 264.2 H583.5 A31 31 0 0 1 614.5 295.2 V431.1 A2.2 2.2 0 0 0 616.7 433.3 H625.0 A20 20 0 0 1 645.0 453.3 V514.3 A20 20 0 0 1 625.0 534.3 H616.7 A2.2 2.2 0 0 0 614.5 536.5 V673.0 A31 31 0 0 1 583.5 704.0 H158.7 A31 31 0 0 1 127.7 673.0 V536.5 A2.2 2.2 0 0 0 125.5 534.3 H118.2 A20 20 0 0 1 98.2 514.3 V453.3 A20 20 0 0 1 118.2 433.3 H125.5 A2.2 2.2 0 0 0 127.7 431.1 V295.2 A31 31 0 0 1 158.7 264.2 Z" stroke="#ff0000" stroke-width="1.1" fill="none"/><rect x="639.5" y="250.5" width="6" height="6" fill="#d40000" stroke="#8a0000" stroke-width="0.8"/><rect x="641.5" y="259.5" width="8.5" height="9" rx="1.5" fill="#7be07b" stroke="#2f8f2f" stroke-width="1"/><line x1="645.5" y1="259" x2="645.5" y2="269" stroke="#006000" stroke-width="1.2"/></svg>
<div class="t" style="left:11.100000000000023px;width:200px;text-align:center;top:141px;font-size:12.5px;line-height:12.5px;color:#7a7a80;letter-spacing:0px;">80</div>
<div class="t" style="left:11.100000000000023px;width:200px;text-align:center;top:931px;font-size:12.5px;line-height:12.5px;color:#7a7a80;letter-spacing:0px;">80</div>
<div class="t" style="left:77.90000000000003px;width:200px;text-align:center;top:141px;font-size:12.5px;line-height:12.5px;color:#7a7a80;letter-spacing:0px;">70</div>
<div class="t" style="left:77.90000000000003px;width:200px;text-align:center;top:931px;font-size:12.5px;line-height:12.5px;color:#7a7a80;letter-spacing:0px;">70</div>
<div class="t" style="left:144.70000000000005px;width:200px;text-align:center;top:141px;font-size:12.5px;line-height:12.5px;color:#7a7a80;letter-spacing:0px;">60</div>
<div class="t" style="left:144.70000000000005px;width:200px;text-align:center;top:931px;font-size:12.5px;line-height:12.5px;color:#7a7a80;letter-spacing:0px;">60</div>
<div class="t" style="left:211.5px;width:200px;text-align:center;top:141px;font-size:12.5px;line-height:12.5px;color:#7a7a80;letter-spacing:0px;">50</div>
<div class="t" style="left:211.5px;width:200px;text-align:center;top:931px;font-size:12.5px;line-height:12.5px;color:#7a7a80;letter-spacing:0px;">50</div>
<div class="t" style="left:278.3px;width:200px;text-align:center;top:141px;font-size:12.5px;line-height:12.5px;color:#7a7a80;letter-spacing:0px;">40</div>
<div class="t" style="left:278.3px;width:200px;text-align:center;top:931px;font-size:12.5px;line-height:12.5px;color:#7a7a80;letter-spacing:0px;">40</div>
<div class="t" style="left:345.1px;width:200px;text-align:center;top:141px;font-size:12.5px;line-height:12.5px;color:#7a7a80;letter-spacing:0px;">30</div>
<div class="t" style="left:345.1px;width:200px;text-align:center;top:931px;font-size:12.5px;line-height:12.5px;color:#7a7a80;letter-spacing:0px;">30</div>
<div class="t" style="left:411.9px;width:200px;text-align:center;top:141px;font-size:12.5px;line-height:12.5px;color:#7a7a80;letter-spacing:0px;">20</div>
<div class="t" style="left:411.9px;width:200px;text-align:center;top:931px;font-size:12.5px;line-height:12.5px;color:#7a7a80;letter-spacing:0px;">20</div>
<div class="t" style="left:478.70000000000005px;width:200px;text-align:center;top:141px;font-size:12.5px;line-height:12.5px;color:#7a7a80;letter-spacing:0px;">10</div>
<div class="t" style="left:478.70000000000005px;width:200px;text-align:center;top:931px;font-size:12.5px;line-height:12.5px;color:#7a7a80;letter-spacing:0px;">10</div>
<div class="t" style="left:545.5px;width:200px;text-align:center;top:141px;font-size:12.5px;line-height:12.5px;color:#7a7a80;letter-spacing:0px;">0</div>
<div class="t" style="left:545.5px;width:200px;text-align:center;top:931px;font-size:12.5px;line-height:12.5px;color:#7a7a80;letter-spacing:0px;">0</div>
<div class="t" style="left:612.3px;width:200px;text-align:center;top:141px;font-size:12.5px;line-height:12.5px;color:#7a7a80;letter-spacing:0px;">-10</div>
<div class="t" style="left:612.3px;width:200px;text-align:center;top:931px;font-size:12.5px;line-height:12.5px;color:#7a7a80;letter-spacing:0px;">-10</div>
<div class="t" style="left:679.1px;width:200px;text-align:center;top:141px;font-size:12.5px;line-height:12.5px;color:#7a7a80;letter-spacing:0px;">-20</div>
<div class="t" style="left:679.1px;width:200px;text-align:center;top:931px;font-size:12.5px;line-height:12.5px;color:#7a7a80;letter-spacing:0px;">-20</div>
<div class="t" style="left:68.4px;top:179px;font-size:12.5px;line-height:12.5px;color:#7a7a80;letter-spacing:0px;">-10</div>
<div class="t" style="left:518px;width:300px;text-align:right;top:179px;font-size:12.5px;line-height:12.5px;color:#7a7a80;letter-spacing:0px;">-10</div>
<div class="t" style="left:68.4px;top:245px;font-size:12.5px;line-height:12.5px;color:#7a7a80;letter-spacing:0px;">0</div>
<div class="t" style="left:518px;width:300px;text-align:right;top:245px;font-size:12.5px;line-height:12.5px;color:#7a7a80;letter-spacing:0px;">0</div>
<div class="t" style="left:68.4px;top:312px;font-size:12.5px;line-height:12.5px;color:#7a7a80;letter-spacing:0px;">10</div>
<div class="t" style="left:518px;width:300px;text-align:right;top:312px;font-size:12.5px;line-height:12.5px;color:#7a7a80;letter-spacing:0px;">10</div>
<div class="t" style="left:68.4px;top:379px;font-size:12.5px;line-height:12.5px;color:#7a7a80;letter-spacing:0px;">20</div>
<div class="t" style="left:518px;width:300px;text-align:right;top:379px;font-size:12.5px;line-height:12.5px;color:#7a7a80;letter-spacing:0px;">20</div>
<div class="t" style="left:68.4px;top:446px;font-size:12.5px;line-height:12.5px;color:#7a7a80;letter-spacing:0px;">30</div>
<div class="t" style="left:518px;width:300px;text-align:right;top:446px;font-size:12.5px;line-height:12.5px;color:#7a7a80;letter-spacing:0px;">30</div>
<div class="t" style="left:68.4px;top:512px;font-size:12.5px;line-height:12.5px;color:#7a7a80;letter-spacing:0px;">40</div>
<div class="t" style="left:518px;width:300px;text-align:right;top:512px;font-size:12.5px;line-height:12.5px;color:#7a7a80;letter-spacing:0px;">40</div>
<div class="t" style="left:68.4px;top:579px;font-size:12.5px;line-height:12.5px;color:#7a7a80;letter-spacing:0px;">50</div>
<div class="t" style="left:518px;width:300px;text-align:right;top:579px;font-size:12.5px;line-height:12.5px;color:#7a7a80;letter-spacing:0px;">50</div>
<div class="t" style="left:68.4px;top:646px;font-size:12.5px;line-height:12.5px;color:#7a7a80;letter-spacing:0px;">60</div>
<div class="t" style="left:518px;width:300px;text-align:right;top:646px;font-size:12.5px;line-height:12.5px;color:#7a7a80;letter-spacing:0px;">60</div>
<div class="t" style="left:68.4px;top:713px;font-size:12.5px;line-height:12.5px;color:#7a7a80;letter-spacing:0px;">70</div>
<div class="t" style="left:518px;width:300px;text-align:right;top:713px;font-size:12.5px;line-height:12.5px;color:#7a7a80;letter-spacing:0px;">70</div>
<div class="t" style="left:68.4px;top:780px;font-size:12.5px;line-height:12.5px;color:#7a7a80;letter-spacing:0px;">80</div>
<div class="t" style="left:518px;width:300px;text-align:right;top:780px;font-size:12.5px;line-height:12.5px;color:#7a7a80;letter-spacing:0px;">80</div>
<div class="t" style="left:68.4px;top:846px;font-size:12.5px;line-height:12.5px;color:#7a7a80;letter-spacing:0px;">90</div>
<div class="t" style="left:518px;width:300px;text-align:right;top:846px;font-size:12.5px;line-height:12.5px;color:#7a7a80;letter-spacing:0px;">90</div>
<div class="t" style="left:68.4px;top:913px;font-size:12.5px;line-height:12.5px;color:#7a7a80;letter-spacing:0px;">100</div>
<div class="t" style="left:518px;width:300px;text-align:right;top:913px;font-size:12.5px;line-height:12.5px;color:#7a7a80;letter-spacing:0px;">100</div>
<div class="b" style="left:823px;top:131px;width:422px;height:819px;background:#f0f0f0;"></div>
<div class="b" style="left:815px;top:131px;width:8px;height:817px;background:linear-gradient(to right, rgba(240,240,240,0), #f0f0f0);"></div>
<div class="b" style="left:829px;top:131px;width:416px;height:22px;background:linear-gradient(to right, #0a0606 0%, #2a0c0c 14%, #5a1818 30%, #8a2022 45%, #b8282e 60%, #c83c30 72%, #d45a30 85%, #de6e30 100%);border-radius:4px;"></div>
<div class="t" style="left:835.4px;top:137px;font-size:12px;line-height:12px;color:#fff;letter-spacing:-0.1px;">Move</div>
<svg style="left:1207px;top:136.0px" width="32" height="12"><path d="M4 4 V1.2 H9.3 V6.5 H6.5" stroke="#1c2430" stroke-width="1.3" fill="none"/><rect x="1.6" y="4.2" width="5.2" height="5.5" stroke="#1c2430" stroke-width="1.3" fill="none"/><path d="M22.8 2.2 L29.2 8.6 M29.2 2.2 L22.8 8.6" stroke="#1c2430" stroke-width="2"/></svg>
<div class="b" style="left:835px;top:166px;width:77px;height:21px;background:#e1e1e1;border:1px solid #adadad;"></div>
<div class="t" style="left:844.6px;top:172px;font-size:11px;line-height:11px;color:#000;letter-spacing:-0.15px;">Get Position</div>
<div class="t" style="left:918.6px;top:172px;font-size:11px;line-height:11px;color:#000;letter-spacing:-0.15px;">X:</div>
<div class="t" style="left:999px;top:172px;font-size:11px;line-height:11px;color:#000;letter-spacing:-0.15px;">Y:</div>
<div class="t" style="left:1079.8px;top:172px;font-size:11px;line-height:11px;color:#000;letter-spacing:-0.15px;">Z:</div>
<div class="t" style="left:1159.5px;top:172px;font-size:11px;line-height:11px;color:#000;letter-spacing:-0.15px;">U:</div>
<div class="t" style="left:833.4px;top:196px;font-size:11px;line-height:11px;color:#000;letter-spacing:-0.2px;">Move to Position</div>
<div class="t" style="left:960.2px;top:196px;font-size:11px;line-height:11px;color:#000;letter-spacing:-0.15px;">X</div>
<div class="b" style="left:974px;top:192px;width:46px;height:16px;background:#fff;"></div>
<div class="t" style="left:976px;top:196px;font-size:11px;line-height:11px;color:#000;letter-spacing:-0.15px;">0.00</div>
<svg style="left:1020px;top:192px" width="14" height="15"><rect x="0.5" y="0.5" width="13" height="14" fill="#f0f0f0" stroke="#d6d6d6"/><path d="M4.0 5.7 L7.0 2.7 L10.0 5.7 Z M4.0 9.3 L7.0 12.3 L10.0 9.3 Z" fill="#333"/><path d="M2 7.5 H12" stroke="#c8c8c8"/></svg>
<div class="t" style="left:1084px;top:196px;font-size:11px;line-height:11px;color:#000;letter-spacing:-0.15px;">Y</div>
<div class="b" style="left:1097px;top:192px;width:46px;height:16px;background:#fff;"></div>
<div class="t" style="left:1099.5px;top:196px;font-size:11px;line-height:11px;color:#000;letter-spacing:-0.15px;">0.00</div>
<svg style="left:1143px;top:192px" width="14" height="15"><rect x="0.5" y="0.5" width="13" height="14" fill="#f0f0f0" stroke="#d6d6d6"/><path d="M4.0 5.7 L7.0 2.7 L10.0 5.7 Z M4.0 9.3 L7.0 12.3 L10.0 9.3 Z" fill="#333"/><path d="M2 7.5 H12" stroke="#c8c8c8"/></svg>
<div class="b" style="left:1166px;top:190px;width:73px;height:21px;background:#e1e1e1;border:1px solid #adadad;"></div>
<div class="t" style="left:1102.5px;width:200px;text-align:center;top:196px;font-size:11px;line-height:11px;color:#000;letter-spacing:-0.15px;">Go</div>
<div class="t" style="left:666px;width:300px;text-align:right;top:220px;font-size:11px;line-height:11px;color:#000;letter-spacing:-0.25px;">Saved Positions:</div>
<div class="b" style="left:973px;top:214px;width:186px;height:20px;background:#e1e1e1;border:1px solid #adadad;"></div>
<div class="t" style="left:976.5px;top:220px;font-size:11px;line-height:11px;color:#000;letter-spacing:-0.15px;">Business Cards</div>
<svg style="left:1144px;top:221.5px" width="10" height="6"><path d="M0.6 0.8 L4.8 5 L9 0.8" stroke="#555" stroke-width="1" fill="none"/></svg>
<div class="b" style="left:1166px;top:214px;width:73px;height:21px;background:#e1e1e1;border:1px solid #adadad;"></div>
<div class="t" style="left:1102.5px;width:200px;text-align:center;top:220px;font-size:11px;line-height:11px;color:#000;letter-spacing:-0.15px;">Manage</div>
<div class="b" style="left:831px;top:247px;width:414px;height:1px;background:#a0a0a0;"></div>
<div class="b" style="left:831px;top:248px;width:414px;height:1px;background:#fff;"></div>
<svg style="left:831px;top:260px" width="26" height="24"><defs><linearGradient id="jg" x1="0" y1="0" x2="0" y2="1"><stop offset="0" stop-color="#fbfbfb"/><stop offset="1" stop-color="#dcdcdc"/></linearGradient></defs><rect x="0.5" y="0.5" width="25" height="22.5" rx="2.5" fill="url(#jg)" stroke="#8c8c8c"/><path d="M11.4 5.6 A6.5 6.5 0 1 1 11.4 18.4" stroke="#000" stroke-width="3.2" fill="none"/><path d="M3.8 4.8 L11.5 2.6 L10.2 10.2 Z" fill="#000"/></svg>
<svg style="left:858px;top:260px" width="26" height="24"><defs><linearGradient id="jg" x1="0" y1="0" x2="0" y2="1"><stop offset="0" stop-color="#fbfbfb"/><stop offset="1" stop-color="#dcdcdc"/></linearGradient></defs><rect x="0.5" y="0.5" width="25" height="22.5" rx="2.5" fill="url(#jg)" stroke="#8c8c8c"/><path d="M5.5 16 L13 8.5 L20.5 16" stroke="#000" stroke-width="3.6" fill="none"/></svg>
<svg style="left:885px;top:260px" width="26" height="24"><defs><linearGradient id="jg" x1="0" y1="0" x2="0" y2="1"><stop offset="0" stop-color="#fbfbfb"/><stop offset="1" stop-color="#dcdcdc"/></linearGradient></defs><rect x="0.5" y="0.5" width="25" height="22.5" rx="2.5" fill="url(#jg)" stroke="#8c8c8c"/><path d="M14.6 5.6 A6.5 6.5 0 1 0 14.6 18.4" stroke="#000" stroke-width="3.2" fill="none"/><path d="M22.2 4.8 L14.5 2.6 L15.8 10.2 Z" fill="#000"/></svg>
<svg style="left:831px;top:285px" width="26" height="24"><defs><linearGradient id="jg" x1="0" y1="0" x2="0" y2="1"><stop offset="0" stop-color="#fbfbfb"/><stop offset="1" stop-color="#dcdcdc"/></linearGradient></defs><rect x="0.5" y="0.5" width="25" height="22.5" rx="2.5" fill="url(#jg)" stroke="#8c8c8c"/><path d="M16.5 4.8 L9.2 12 L16.5 19.2" stroke="#000" stroke-width="3.6" fill="none"/></svg>
<svg style="left:858px;top:285px" width="26" height="24"><defs><linearGradient id="jg" x1="0" y1="0" x2="0" y2="1"><stop offset="0" stop-color="#fbfbfb"/><stop offset="1" stop-color="#dcdcdc"/></linearGradient></defs><rect x="0.5" y="0.5" width="25" height="22.5" rx="2.5" fill="url(#jg)" stroke="#8c8c8c"/><path d="M3.5 12.2 L12.8 4 L22 12.2" stroke="#000" stroke-width="2.3" fill="none"/><path d="M6.6 10 V18.3 H19 V10" stroke="#000" stroke-width="2.2" fill="none"/><rect x="10.6" y="12.8" width="4.4" height="6" fill="#000"/><rect x="5.2" y="4.2" width="2.4" height="5" fill="#000"/></svg>
<svg style="left:885px;top:285px" width="26" height="24"><defs><linearGradient id="jg" x1="0" y1="0" x2="0" y2="1"><stop offset="0" stop-color="#fbfbfb"/><stop offset="1" stop-color="#dcdcdc"/></linearGradient></defs><rect x="0.5" y="0.5" width="25" height="22.5" rx="2.5" fill="url(#jg)" stroke="#8c8c8c"/><path d="M9.5 4.8 L16.8 12 L9.5 19.2" stroke="#000" stroke-width="3.6" fill="none"/></svg>
<svg style="left:831px;top:310px" width="26" height="24"><defs><linearGradient id="jg" x1="0" y1="0" x2="0" y2="1"><stop offset="0" stop-color="#fbfbfb"/><stop offset="1" stop-color="#dcdcdc"/></linearGradient></defs><rect x="0.5" y="0.5" width="25" height="22.5" rx="2.5" fill="url(#jg)" stroke="#8c8c8c"/><path d="M11 2.8 H15.5 V5 H11 Z M11 6.8 H15.5 V9 H11 Z" fill="#000"/><path d="M11 10.6 H15.5 V14 H19.5 L13.2 20.5 L7 14 H11 Z" fill="#000"/></svg>
<svg style="left:858px;top:310px" width="26" height="24"><defs><linearGradient id="jg" x1="0" y1="0" x2="0" y2="1"><stop offset="0" stop-color="#fbfbfb"/><stop offset="1" stop-color="#dcdcdc"/></linearGradient></defs><rect x="0.5" y="0.5" width="25" height="22.5" rx="2.5" fill="url(#jg)" stroke="#8c8c8c"/><path d="M5.5 8.2 L13 15.7 L20.5 8.2" stroke="#000" stroke-width="3.6" fill="none"/></svg>
<svg style="left:885px;top:310px" width="26" height="24"><defs><linearGradient id="jg" x1="0" y1="0" x2="0" y2="1"><stop offset="0" stop-color="#fbfbfb"/><stop offset="1" stop-color="#dcdcdc"/></linearGradient></defs><rect x="0.5" y="0.5" width="25" height="22.5" rx="2.5" fill="url(#jg)" stroke="#8c8c8c"/><path d="M11 18.5 H15.5 V20.7 H11 Z M11 14.7 H15.5 V16.9 H11 Z" fill="#000"/><path d="M11 13.2 H15.5 V9.6 H19.5 L13.2 3 L7 9.6 H11 Z" fill="#000"/></svg>
<div class="t" style="left:1111.3px;top:274px;font-size:11px;line-height:11px;color:#000;letter-spacing:-0.15px;">Distance</div>
<div class="b" style="left:1154px;top:270px;width:47px;height:16px;background:#fff;"></div>
<div class="t" style="left:1156.8px;top:274px;font-size:11px;line-height:11px;color:#000;letter-spacing:-0.15px;">5.00</div>
<svg style="left:1201px;top:271px" width="14" height="15"><rect x="0.5" y="0.5" width="13" height="14" fill="#f0f0f0" stroke="#d6d6d6"/><path d="M4.0 5.7 L7.0 2.7 L10.0 5.7 Z M4.0 9.3 L7.0 12.3 L10.0 9.3 Z" fill="#333"/><path d="M2 7.5 H12" stroke="#c8c8c8"/></svg>
<div class="t" style="left:1217.3px;top:274px;font-size:11px;line-height:11px;color:#000;letter-spacing:-0.15px;">mm</div>
<div class="t" style="left:1122.6px;top:302px;font-size:11px;line-height:11px;color:#000;letter-spacing:-0.15px;">Speed</div>
<div class="b" style="left:1154px;top:298px;width:47px;height:16px;background:#fff;"></div>
<div class="t" style="left:1156.8px;top:302px;font-size:11px;line-height:11px;color:#000;letter-spacing:-0.15px;">40.0</div>
<svg style="left:1201px;top:299px" width="14" height="15"><rect x="0.5" y="0.5" width="13" height="14" fill="#f0f0f0" stroke="#d6d6d6"/><path d="M4.0 5.7 L7.0 2.7 L10.0 5.7 Z M4.0 9.3 L7.0 12.3 L10.0 9.3 Z" fill="#333"/><path d="M2 7.5 H12" stroke="#c8c8c8"/></svg>
<div class="t" style="left:1217.3px;top:302px;font-size:11px;line-height:11px;color:#000;letter-spacing:-0.15px;">mm/s</div>
<div class="t" style="left:1112.3px;top:330px;font-size:11px;line-height:11px;color:#000;letter-spacing:-0.15px;">Z-Speed</div>
<div class="b" style="left:1154px;top:326px;width:47px;height:16px;background:#fff;"></div>
<div class="t" style="left:1156.8px;top:330px;font-size:11px;line-height:11px;color:#000;letter-spacing:-0.15px;">10.0</div>
<svg style="left:1201px;top:327px" width="14" height="15"><rect x="0.5" y="0.5" width="13" height="14" fill="#f0f0f0" stroke="#d6d6d6"/><path d="M4.0 5.7 L7.0 2.7 L10.0 5.7 Z M4.0 9.3 L7.0 12.3 L10.0 9.3 Z" fill="#333"/><path d="M2 7.5 H12" stroke="#c8c8c8"/></svg>
<div class="t" style="left:1217.3px;top:330px;font-size:11px;line-height:11px;color:#000;letter-spacing:-0.15px;">mm/s</div>
<div class="b" style="left:870px;top:363px;width:73px;height:32px;background:#e1e1e1;border:1px solid #adadad;"></div>
<div class="t" style="left:806.5px;width:200px;text-align:center;top:368px;font-size:11px;line-height:11px;color:#000;letter-spacing:-0.15px;">Set</div>
<div class="t" style="left:806.5px;width:200px;text-align:center;top:381px;font-size:11px;line-height:11px;color:#000;letter-spacing:-0.15px;">Origin</div>
<div class="b" style="left:957px;top:363px;width:73px;height:32px;background:#e1e1e1;border:1px solid #adadad;"></div>
<div class="t" style="left:893.5px;width:200px;text-align:center;top:368px;font-size:11px;line-height:11px;color:#000;letter-spacing:-0.15px;">Clear</div>
<div class="t" style="left:893.5px;width:200px;text-align:center;top:381px;font-size:11px;line-height:11px;color:#000;letter-spacing:-0.15px;">Origin</div>
<div class="b" style="left:1044px;top:363px;width:73px;height:32px;background:#e1e1e1;border:1px solid #adadad;"></div>
<div class="t" style="left:980.5px;width:200px;text-align:center;top:368px;font-size:11px;line-height:11px;color:#000;letter-spacing:-0.15px;">Set Finish</div>
<div class="t" style="left:980.5px;width:200px;text-align:center;top:381px;font-size:11px;line-height:11px;color:#000;letter-spacing:-0.15px;">Position</div>
<div class="b" style="left:1131px;top:368px;width:73px;height:22px;background:#e1e1e1;border:1px solid #adadad;"></div>
<svg style="left:1138px;top:372px" width="18" height="14"><path d="M4 1 H1 V4 M1 9 V12 H4 M13 1 H16.5 V4 M16.5 9 V12 H13" stroke="#888" stroke-width="1.1" fill="none"/><path d="M8.8 3.5 V9.5 M5.8 6.5 H11.8" stroke="#666" stroke-width="1.2"/></svg>
<div class="t" style="left:1158.5px;top:375px;font-size:11px;line-height:11px;color:#000;letter-spacing:-0.15px;">Focus Z</div>
<svg style="left:836px;top:410px" width="16" height="10"><rect x="0.7" y="0.7" width="14.6" height="8.6" rx="3" fill="#6e2a2a" stroke="#6e2a2a" stroke-width="1.4"/><path d="M8.5 1.4 H12 Q14.6 1.4 14.6 4 V6 Q14.6 8.6 12 8.6 H8.5 Z" fill="#f0f0f0"/></svg>
<div class="t" style="left:856.9px;top:410px;font-size:11px;line-height:11px;color:#000;letter-spacing:-0.15px;">Move From Machine Zero</div>
<div class="b" style="left:829px;top:433px;width:416px;height:1px;background:#a8a8a8;"></div>
<div class="b" style="left:831px;top:434px;width:86px;height:18px;background:#f0f0f0;border-right:1px solid #d9d9d9;border-left:1px solid #d9d9d9;border-bottom:1px solid #d9d9d9;"></div>
<div class="t" style="left:840.5px;top:438px;font-size:11px;line-height:11px;color:#000;letter-spacing:-0.15px;">Cuts / Layers</div>
<div class="b" style="left:915px;top:433px;width:53px;height:21px;background:#fff;border:1px solid #dcdcdc;border-top:none;"></div>
<div class="t" style="left:928.4px;top:439px;font-size:11px;line-height:11px;color:#000;letter-spacing:-0.15px;">Move</div>
<div class="b" style="left:968px;top:434px;width:62px;height:18px;background:#f0f0f0;border-right:1px solid #d9d9d9;border-left:1px solid #d9d9d9;border-bottom:1px solid #d9d9d9;"></div>
<div class="t" style="left:978.3px;top:438px;font-size:11px;line-height:11px;color:#000;letter-spacing:-0.15px;">Console</div>
<div class="b" style="left:1029px;top:434px;width:100px;height:18px;background:#f0f0f0;border-right:1px solid #d9d9d9;border-left:1px solid #d9d9d9;border-bottom:1px solid #d9d9d9;"></div>
<div class="t" style="left:1040.5px;top:438px;font-size:11px;line-height:11px;color:#000;letter-spacing:-0.15px;">Camera Control</div>
<div class="b" style="left:1128px;top:434px;width:85px;height:18px;background:#f0f0f0;border-right:1px solid #d9d9d9;border-left:1px solid #d9d9d9;border-bottom:1px solid #d9d9d9;"></div>
<div class="t" style="left:1139.7px;top:438px;font-size:11px;line-height:11px;color:#000;letter-spacing:-0.15px;">Variable Text</div>
<div class="b" style="left:829px;top:458px;width:416px;height:22px;background:linear-gradient(to right, #0a0606 0%, #2a0c0c 14%, #5a1818 30%, #8a2022 45%, #b8282e 60%, #c83c30 72%, #d45a30 85%, #de6e30 100%);border-radius:4px;"></div>
<div class="t" style="left:835.4px;top:464px;font-size:12px;line-height:12px;color:#fff;letter-spacing:-0.1px;">Laser</div>
<svg style="left:1207px;top:463.0px" width="32" height="12"><path d="M4 4 V1.2 H9.3 V6.5 H6.5" stroke="#1c2430" stroke-width="1.3" fill="none"/><rect x="1.6" y="4.2" width="5.2" height="5.5" stroke="#1c2430" stroke-width="1.3" fill="none"/><path d="M22.8 2.2 L29.2 8.6 M29.2 2.2 L22.8 8.6" stroke="#1c2430" stroke-width="2"/></svg>
<div class="t" style="left:829.6px;top:486px;font-size:11px;line-height:11px;color:#000;letter-spacing:-0.15px;">Disconnected</div>
<div class="b" style="left:831px;top:502px;width:134px;height:31px;background:#e1e1e1;border:1px solid #adadad;"></div>
<div class="b" style="left:970px;top:502px;width:134px;height:31px;background:#e1e1e1;border:1px solid #adadad;"></div>
<div class="b" style="left:1110px;top:502px;width:133px;height:31px;background:#e1e1e1;border:1px solid #adadad;"></div>
<svg style="left:874px;top:510px" width="14" height="16"><rect x="0" y="0" width="5" height="15.5" rx="0.8" fill="#000"/><rect x="8.5" y="0" width="5" height="15.5" rx="0.8" fill="#000"/></svg>
<div class="t" style="left:891.8px;top:513px;font-size:11px;line-height:11px;color:#000;letter-spacing:-0.15px;">Pause</div>
<div class="b" style="left:1016px;top:510px;width:16px;height:15px;background:#000;border-radius:1px;"></div>
<div class="t" style="left:1035.4px;top:513px;font-size:11px;line-height:11px;color:#000;letter-spacing:-0.15px;">Stop</div>
<svg style="left:1154px;top:509px" width="16" height="17"><path d="M0.5 0.5 L15.5 8.2 L0.5 16 Z" fill="#000"/></svg>
<div class="t" style="left:1173.2px;top:513px;font-size:11px;line-height:11px;color:#000;letter-spacing:-0.15px;">Start</div>
<div class="b" style="left:831px;top:536px;width:99px;height:31px;background:#e1e1e1;border:1px solid #adadad;"></div>
<div class="b" style="left:935px;top:536px;width:100px;height:31px;background:#e1e1e1;border:1px solid #adadad;"></div>
<div class="b" style="left:1040px;top:536px;width:99px;height:31px;background:#e1e1e1;border:1px solid #adadad;"></div>
<div class="b" style="left:1144px;top:536px;width:99px;height:31px;background:#e1e1e1;border:1px solid #adadad;"></div>
<svg style="left:855px;top:543px" width="17" height="16"><path d="M1 6 V1.2 H6.5 M10 1.2 H15.5 V6 M15.5 9.5 V14.8 H10 M6.5 14.8 H1 V9.5" stroke="#000" stroke-width="2.2" fill="none"/></svg>
<div class="t" style="left:874px;top:548px;font-size:11px;line-height:11px;color:#000;letter-spacing:-0.15px;">Frame</div>
<svg style="left:959px;top:543px" width="18" height="18"><circle cx="9" cy="9" r="7.3" stroke="#000" stroke-width="2.2" fill="none" stroke-dasharray="4.2 3.4"/></svg>
<div class="t" style="left:979px;top:548px;font-size:11px;line-height:11px;color:#000;letter-spacing:-0.15px;">Frame</div>
<div class="t" style="left:989.5px;width:200px;text-align:center;top:548px;font-size:11px;line-height:11px;color:#000;letter-spacing:-0.15px;">Save GCode</div>
<div class="t" style="left:1093.5px;width:200px;text-align:center;top:548px;font-size:11px;line-height:11px;color:#000;letter-spacing:-0.15px;">Run GCode</div>
<div class="b" style="left:831px;top:570px;width:95px;height:22px;background:#e1e1e1;border:1px solid #adadad;"></div>
<svg style="left:855px;top:573px" width="17" height="16"><path d="M1 8 L8.2 1.3 L15.4 8" stroke="#000" stroke-width="2" fill="none"/><path d="M3.5 7 V14.5 H12.9 V7" stroke="#000" stroke-width="2" fill="none"/><rect x="6.6" y="10" width="3.4" height="5" fill="#000"/><rect x="2.5" y="1.5" width="2" height="4" fill="#000"/></svg>
<div class="t" style="left:874px;top:577px;font-size:11px;line-height:11px;color:#000;letter-spacing:-0.15px;">Home</div>
<div class="b" style="left:934px;top:570px;width:95px;height:21px;background:#e1e1e1;border:1px solid #adadad;"></div>
<div class="t" style="left:952.6px;top:576px;font-size:11px;line-height:11px;color:#000;letter-spacing:-0.2px;">Go to Origin</div>
<div class="t" style="left:1077.1px;top:577px;font-size:11px;line-height:11px;color:#000;letter-spacing:-0.15px;">Start From:</div>
<div class="b" style="left:1139px;top:571px;width:105px;height:20px;background:#e1e1e1;border:1px solid #adadad;"></div>
<div class="t" style="left:1142.4px;top:577px;font-size:11px;line-height:11px;color:#4a1010;letter-spacing:-0.2px;">Current Position</div>
<svg style="left:1229px;top:578.5px" width="10" height="6"><path d="M0.6 0.8 L4.8 5 L9 0.8" stroke="#555" stroke-width="1" fill="none"/></svg>
<div class="b" style="left:1141px;top:593px;width:101px;height:53px;background:#ececec;border:1px solid #dedede;"></div>
<svg style="left:1141px;top:593px" width="101" height="53"><circle cx="7.400000000000091" cy="10.299999999999955" r="6" fill="#fff" stroke="#333" stroke-width="1"/><circle cx="40.299999999999955" cy="10.299999999999955" r="6" fill="#fff" stroke="#333" stroke-width="1"/><circle cx="73.20000000000005" cy="10.299999999999955" r="6" fill="#fff" stroke="#333" stroke-width="1"/><circle cx="73.20000000000005" cy="10.299999999999955" r="3.5" fill="#333"/><circle cx="7.400000000000091" cy="26.799999999999955" r="6" fill="#fff" stroke="#333" stroke-width="1"/><circle cx="40.299999999999955" cy="26.799999999999955" r="6" fill="#fff" stroke="#333" stroke-width="1"/><circle cx="73.20000000000005" cy="26.799999999999955" r="6" fill="#fff" stroke="#333" stroke-width="1"/><circle cx="7.400000000000091" cy="42.39999999999998" r="6" fill="#fff" stroke="#333" stroke-width="1"/><circle cx="40.299999999999955" cy="42.39999999999998" r="6" fill="#fff" stroke="#333" stroke-width="1"/><circle cx="73.20000000000005" cy="42.39999999999998" r="6" fill="#fff" stroke="#333" stroke-width="1"/></svg>
<div class="t" style="left:1085px;top:615px;font-size:11px;line-height:11px;color:#000;letter-spacing:-0.15px;">Job Origin</div>
<svg style="left:830px;top:634px" width="16" height="10"><rect x="0.7" y="0.7" width="14.6" height="8.6" rx="3" fill="#6e2a2a" stroke="#6e2a2a" stroke-width="1.4"/><path d="M8.5 1.4 H12 Q14.6 1.4 14.6 4 V6 Q14.6 8.6 12 8.6 H8.5 Z" fill="#f0f0f0"/></svg>
<div class="t" style="left:851.5px;top:635px;font-size:11px;line-height:11px;color:#000;letter-spacing:-0.15px;">Cut Selected Graphics</div>
<svg style="left:830px;top:654px" width="16" height="10"><rect x="0.7" y="0.7" width="14.6" height="8.6" rx="3" fill="#7a7a7a" stroke="#7a7a7a" stroke-width="1.4"/><path d="M8.5 1.4 H12 Q14.6 1.4 14.6 4 V6 Q14.6 8.6 12 8.6 H8.5 Z" fill="#f0f0f0"/></svg>
<div class="t" style="left:851.5px;top:655px;font-size:11px;line-height:11px;color:#8a8a8a;letter-spacing:-0.15px;">Use Selection Origin</div>
<svg style="left:830px;top:677px" width="16" height="10"><rect x="0.7" y="0.7" width="14.6" height="8.6" rx="3" fill="#22cc22" stroke="#22cc22" stroke-width="1.4"/><path d="M7.5 1.4 H4 Q1.4 1.4 1.4 4 V6 Q1.4 8.6 4 8.6 H7.5 Z" fill="#f0f0f0"/><circle cx="11.1" cy="5" r="1.5" fill="#000"/></svg>
<div class="t" style="left:851.5px;top:678px;font-size:11px;line-height:11px;color:#000;letter-spacing:-0.15px;">Optimize Cut Path</div>
<div class="b" style="left:1037px;top:648px;width:206px;height:22px;background:#e1e1e1;border:1px solid #adadad;"></div>
<svg style="left:1085px;top:651px" width="16" height="16"><path d="M0.5 8 H3.5 M12.5 8 H15.5 M8 0.5 V3 M8 13 V15.5" stroke="#000" stroke-width="1.6"/><path d="M5 8 H11 M8 5 V11" stroke="#f00" stroke-width="2"/></svg>
<div class="t" style="left:1104.4px;top:655px;font-size:11px;line-height:11px;color:#000;letter-spacing:-0.15px;">Show Last Position</div>
<div class="b" style="left:1037px;top:672px;width:206px;height:20px;background:#e1e1e1;border:1px solid #adadad;"></div>
<div class="t" style="left:1040px;width:200px;text-align:center;top:678px;font-size:11px;line-height:11px;color:#000;letter-spacing:-0.15px;">Optimization Settings</div>
<div class="b" style="left:831px;top:696px;width:73px;height:21px;background:#e1e1e1;border:1px solid #adadad;"></div>
<div class="t" style="left:767.5px;width:200px;text-align:center;top:702px;font-size:11px;line-height:11px;color:#000;letter-spacing:-0.15px;">Devices</div>
<div class="b" style="left:911px;top:696px;width:164px;height:21px;background:#e1e1e1;border:1px solid #adadad;"></div>
<div class="t" style="left:914.7px;top:702px;font-size:11px;line-height:11px;color:#000;letter-spacing:-0.15px;">(Auto)</div>
<svg style="left:1060px;top:704.5px" width="10" height="6"><path d="M0.6 0.8 L4.8 5 L9 0.8" stroke="#555" stroke-width="1" fill="none"/></svg>
<div class="b" style="left:1081px;top:696px;width:163px;height:21px;background:#e1e1e1;border:1px solid #adadad;"></div>
<div class="t" style="left:1084.3px;top:702px;font-size:11px;line-height:11px;color:#000;letter-spacing:-0.2px;">Cohesion3D (Smoothie)</div>
<svg style="left:1230px;top:704.5px" width="10" height="6"><path d="M0.6 0.8 L4.8 5 L9 0.8" stroke="#555" stroke-width="1" fill="none"/></svg>
<div class="b" style="left:880px;top:754px;width:365px;height:1px;background:#a8a8a8;"></div>
<div class="b" style="left:829px;top:754px;width:52px;height:21px;background:#fff;border:1px solid #dcdcdc;border-top:none;"></div>
<div class="t" style="left:839.8px;top:760px;font-size:11px;line-height:11px;color:#000;letter-spacing:-0.15px;">Laser</div>
<div class="b" style="left:881px;top:755px;width:53px;height:18px;border-bottom:1px solid #d4d4d4;border-right:1px solid #e4e4e4;"></div>
<div class="t" style="left:890.1px;top:759px;font-size:11px;line-height:11px;color:#000;letter-spacing:-0.15px;">Library</div>
<div class="b" style="left:829px;top:779px;width:416px;height:22px;background:linear-gradient(to right, #0a0606 0%, #2a0c0c 14%, #5a1818 30%, #8a2022 45%, #b8282e 60%, #c83c30 72%, #d45a30 85%, #de6e30 100%);border-radius:4px;"></div>
<div class="t" style="left:835.4px;top:785px;font-size:12px;line-height:12px;color:#fff;letter-spacing:-0.1px;">Shape Properties</div>
<svg style="left:1207px;top:784.0px" width="32" height="12"><path d="M4 4 V1.2 H9.3 V6.5 H6.5" stroke="#1c2430" stroke-width="1.3" fill="none"/><rect x="1.6" y="4.2" width="5.2" height="5.5" stroke="#1c2430" stroke-width="1.3" fill="none"/><path d="M22.8 2.2 L29.2 8.6 M29.2 2.2 L22.8 8.6" stroke="#1c2430" stroke-width="2"/></svg>
<div class="b" style="left:1px;top:948px;width:1244px;height:56px;background:#f0f0f0;"></div>
<div class="b" style="left:61px;top:948px;width:762px;height:1px;background:#e6e6e6;"></div>
<div class="b" style="left:1px;top:951px;width:1244px;height:1px;background:#fbfbfb;"></div>
<div class="b" style="left:1px;top:950px;width:60px;height:1px;background:#a8a8a8;"></div>
<svg style="left:0;top:0" width="1246" height="1005"><rect x="6" y="955" width="1" height="1" fill="#9a9a9a"/><rect x="7" y="954" width="1" height="1" fill="#c8c8c8"/><rect x="6" y="958" width="1" height="1" fill="#9a9a9a"/><rect x="7" y="957" width="1" height="1" fill="#c8c8c8"/><rect x="6" y="961" width="1" height="1" fill="#9a9a9a"/><rect x="7" y="960" width="1" height="1" fill="#c8c8c8"/><rect x="6" y="964" width="1" height="1" fill="#9a9a9a"/><rect x="7" y="963" width="1" height="1" fill="#c8c8c8"/><rect x="6" y="967" width="1" height="1" fill="#9a9a9a"/><rect x="7" y="966" width="1" height="1" fill="#c8c8c8"/><rect x="6" y="970" width="1" height="1" fill="#9a9a9a"/><rect x="7" y="969" width="1" height="1" fill="#c8c8c8"/><rect x="6" y="973" width="1" height="1" fill="#9a9a9a"/><rect x="7" y="972" width="1" height="1" fill="#c8c8c8"/><rect x="6" y="976" width="1" height="1" fill="#9a9a9a"/><rect x="7" y="975" width="1" height="1" fill="#c8c8c8"/><rect x="6" y="979" width="1" height="1" fill="#9a9a9a"/><rect x="7" y="978" width="1" height="1" fill="#c8c8c8"/></svg>
<div class="b" style="left:11px;top:953px;width:26px;height:28px;background:#d4e8fb;border:1px solid #99c9f2;"></div>
<div class="b" style="left:14px;top:957px;width:22px;height:22px;background:#000000;"></div>
<div class="t" style="left:-75px;width:200px;text-align:center;top:963px;font-size:11.5px;line-height:11.5px;color:#fff;letter-spacing:0px;">00</div>
<div class="b" style="left:39px;top:956px;width:22px;height:22px;background:#0000ff;"></div>
<div class="t" style="left:-50px;width:200px;text-align:center;top:962px;font-size:11.5px;line-height:11.5px;color:#fff;letter-spacing:0px;">01</div>
<div class="b" style="left:65px;top:956px;width:22px;height:22px;background:#ff0000;"></div>
<div class="t" style="left:-24px;width:200px;text-align:center;top:962px;font-size:11.5px;line-height:11.5px;color:#fff;letter-spacing:0px;">02</div>
<div class="b" style="left:91px;top:956px;width:22px;height:22px;background:#00e000;"></div>
<div class="t" style="left:2px;width:200px;text-align:center;top:962px;font-size:11.5px;line-height:11.5px;color:#000;letter-spacing:0px;">03</div>
<div class="b" style="left:117px;top:956px;width:22px;height:22px;background:#d0d000;"></div>
<div class="t" style="left:28px;width:200px;text-align:center;top:962px;font-size:11.5px;line-height:11.5px;color:#000;letter-spacing:0px;">04</div>
<div class="b" style="left:143px;top:956px;width:22px;height:22px;background:#ff8000;"></div>
<div class="t" style="left:54px;width:200px;text-align:center;top:962px;font-size:11.5px;line-height:11.5px;color:#000;letter-spacing:0px;">05</div>
<div class="b" style="left:169px;top:956px;width:22px;height:22px;background:#00e0e0;"></div>
<div class="t" style="left:80px;width:200px;text-align:center;top:962px;font-size:11.5px;line-height:11.5px;color:#000;letter-spacing:0px;">06</div>
<div class="b" style="left:195px;top:956px;width:22px;height:22px;background:#ff00ff;"></div>
<div class="t" style="left:106px;width:200px;text-align:center;top:962px;font-size:11.5px;line-height:11.5px;color:#fff;letter-spacing:0px;">07</div>
<div class="b" style="left:221px;top:956px;width:22px;height:22px;background:#b4b4b4;"></div>
<div class="t" style="left:132px;width:200px;text-align:center;top:962px;font-size:11.5px;line-height:11.5px;color:#000;letter-spacing:0px;">08</div>
<div class="b" style="left:247px;top:956px;width:22px;height:22px;background:#0000a0;"></div>
<div class="t" style="left:158px;width:200px;text-align:center;top:962px;font-size:11.5px;line-height:11.5px;color:#fff;letter-spacing:0px;">09</div>
<div class="b" style="left:273px;top:956px;width:22px;height:22px;background:#a00000;"></div>
<div class="t" style="left:184px;width:200px;text-align:center;top:962px;font-size:11.5px;line-height:11.5px;color:#fff;letter-spacing:0px;">10</div>
<div class="b" style="left:299px;top:956px;width:22px;height:22px;background:#00a000;"></div>
<div class="t" style="left:210px;width:200px;text-align:center;top:962px;font-size:11.5px;line-height:11.5px;color:#fff;letter-spacing:0px;">11</div>
<div class="b" style="left:325px;top:956px;width:22px;height:22px;background:#a0a000;"></div>
<div class="t" style="left:236px;width:200px;text-align:center;top:962px;font-size:11.5px;line-height:11.5px;color:#000;letter-spacing:0px;">12</div>
<div class="b" style="left:351px;top:956px;width:22px;height:22px;background:#c08000;"></div>
<div class="t" style="left:262px;width:200px;text-align:center;top:962px;font-size:11.5px;line-height:11.5px;color:#000;letter-spacing:0px;">13</div>
<div class="b" style="left:377px;top:956px;width:22px;height:22px;background:#00a0ff;"></div>
<div class="t" style="left:288px;width:200px;text-align:center;top:962px;font-size:11.5px;line-height:11.5px;color:#fff;letter-spacing:0px;">14</div>
<div class="b" style="left:403px;top:956px;width:22px;height:22px;background:#a000a0;"></div>
<div class="t" style="left:314px;width:200px;text-align:center;top:962px;font-size:11.5px;line-height:11.5px;color:#fff;letter-spacing:0px;">15</div>
<div class="b" style="left:429px;top:956px;width:22px;height:22px;background:#808080;"></div>
<div class="t" style="left:340px;width:200px;text-align:center;top:962px;font-size:11.5px;line-height:11.5px;color:#000;letter-spacing:0px;">16</div>
<div class="b" style="left:455px;top:956px;width:22px;height:22px;background:#7d87b9;"></div>
<div class="t" style="left:366px;width:200px;text-align:center;top:962px;font-size:11.5px;line-height:11.5px;color:#000;letter-spacing:0px;">17</div>
<div class="b" style="left:481px;top:956px;width:22px;height:22px;background:#bb7784;"></div>
<div class="t" style="left:392px;width:200px;text-align:center;top:962px;font-size:11.5px;line-height:11.5px;color:#000;letter-spacing:0px;">18</div>
<div class="b" style="left:507px;top:956px;width:22px;height:22px;background:#4a6fe3;"></div>
<div class="t" style="left:418px;width:200px;text-align:center;top:962px;font-size:11.5px;line-height:11.5px;color:#fff;letter-spacing:0px;">19</div>
<div class="b" style="left:533px;top:956px;width:22px;height:22px;background:#d33f6a;"></div>
<div class="t" style="left:444px;width:200px;text-align:center;top:962px;font-size:11.5px;line-height:11.5px;color:#fff;letter-spacing:0px;">20</div>
<div class="b" style="left:559px;top:956px;width:22px;height:22px;background:#8cd78c;"></div>
<div class="t" style="left:470px;width:200px;text-align:center;top:962px;font-size:11.5px;line-height:11.5px;color:#000;letter-spacing:0px;">21</div>
<div class="b" style="left:585px;top:956px;width:22px;height:22px;background:#f0b98d;"></div>
<div class="t" style="left:496px;width:200px;text-align:center;top:962px;font-size:11.5px;line-height:11.5px;color:#000;letter-spacing:0px;">22</div>
<div class="b" style="left:611px;top:956px;width:22px;height:22px;background:#f6c4e1;"></div>
<div class="t" style="left:522px;width:200px;text-align:center;top:962px;font-size:11.5px;line-height:11.5px;color:#000;letter-spacing:0px;">23</div>
<div class="b" style="left:637px;top:956px;width:22px;height:22px;background:#fa9ed4;"></div>
<div class="t" style="left:548px;width:200px;text-align:center;top:962px;font-size:11.5px;line-height:11.5px;color:#000;letter-spacing:0px;">24</div>
<div class="b" style="left:663px;top:956px;width:22px;height:22px;background:#500a78;"></div>
<div class="t" style="left:574px;width:200px;text-align:center;top:962px;font-size:11.5px;line-height:11.5px;color:#fff;letter-spacing:0px;">25</div>
<div class="b" style="left:689px;top:956px;width:22px;height:22px;background:#b45a00;"></div>
<div class="t" style="left:600px;width:200px;text-align:center;top:962px;font-size:11.5px;line-height:11.5px;color:#fff;letter-spacing:0px;">26</div>
<div class="b" style="left:715px;top:956px;width:22px;height:22px;background:#004754;"></div>
<div class="t" style="left:626px;width:200px;text-align:center;top:962px;font-size:11.5px;line-height:11.5px;color:#fff;letter-spacing:0px;">27</div>
<div class="b" style="left:741px;top:956px;width:22px;height:22px;background:#86fa88;"></div>
<div class="t" style="left:652px;width:200px;text-align:center;top:962px;font-size:11.5px;line-height:11.5px;color:#000;letter-spacing:0px;">28</div>
<div class="b" style="left:767px;top:956px;width:22px;height:22px;background:#ffdb66;"></div>
<div class="t" style="left:678px;width:200px;text-align:center;top:962px;font-size:11.5px;line-height:11.5px;color:#000;letter-spacing:0px;">29</div>
<div class="b" style="left:794px;top:955px;width:1px;height:26px;background:#d0d0d0;"></div>
<div class="b" style="left:799.5px;top:956px;width:22px;height:22px;background:#f36926;"></div>
<div class="t" style="left:710.5px;width:200px;text-align:center;top:962px;font-size:11.5px;line-height:11.5px;color:#000;letter-spacing:0px;">T1</div>
<div class="b" style="left:825px;top:956px;width:22px;height:22px;background:#0c96d9;"></div>
<div class="t" style="left:736px;width:200px;text-align:center;top:962px;font-size:11.5px;line-height:11.5px;color:#fff;letter-spacing:0px;">T2</div>
<div class="t" style="left:3.5px;top:990px;font-size:11px;line-height:11px;color:#000;letter-spacing:0.1px;">x: -26.00, y: 0.00 mm</div>
<div class="b" style="left:409px;top:985px;width:1px;height:18px;background:#d8d8d8;"></div>
<svg style="left:1234px;top:994px" width="9" height="9"><rect x="6" y="0" width="2" height="2" fill="#a0a0a0"/><rect x="3" y="3" width="2" height="2" fill="#a0a0a0"/><rect x="6" y="3" width="2" height="2" fill="#a0a0a0"/><rect x="0" y="6" width="2" height="2" fill="#a0a0a0"/><rect x="3" y="6" width="2" height="2" fill="#a0a0a0"/><rect x="6" y="6" width="2" height="2" fill="#a0a0a0"/></svg>
<div class="b" style="left:1226px;top:987px;width:1px;height:16px;background:#dadada;"></div>
</body></html>
